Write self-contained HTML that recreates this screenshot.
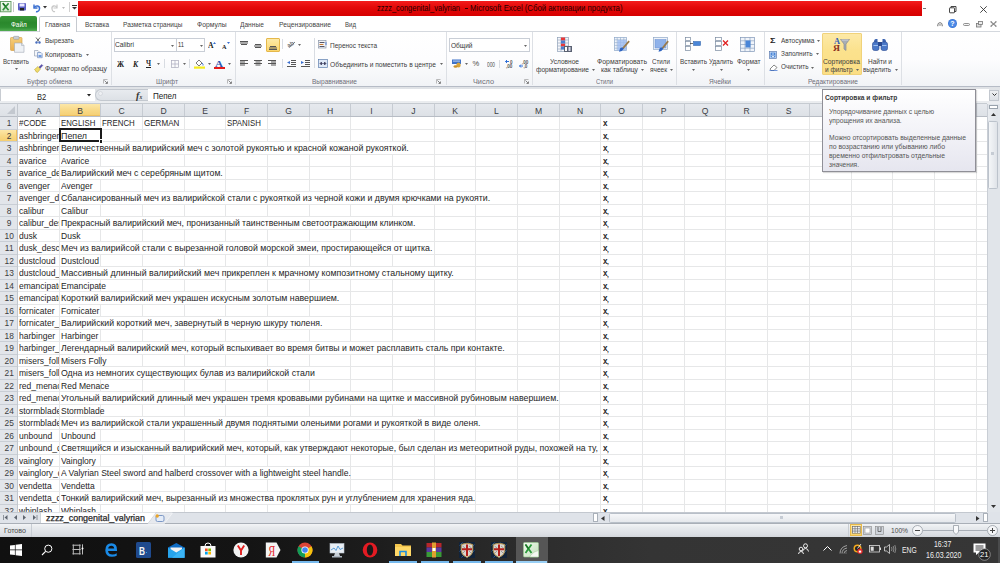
<!DOCTYPE html><html><head><meta charset="utf-8"><style>
html,body{margin:0;padding:0;width:1000px;height:563px;overflow:hidden;background:#fff;position:relative;font-family:"Liberation Sans",sans-serif}
.t{position:absolute;white-space:nowrap;line-height:0}
svg{overflow:visible}
</style></head><body>
<div style="position:absolute;left:0px;top:0px;width:1000px;height:16px;background:#fff"></div>
<div style="position:absolute;left:78px;top:0.5px;width:844px;height:15px;background:linear-gradient(#f41d1d,#e40a0a 40%,#d60000)"></div>
<div class="t" style="left:377px;top:8.16px;font-size:8.6px;color:#1e0000;font-weight:normal;transform:scaleX(0.8688);transform-origin:0 0;">zzzz_congenital_valyrian</div>
<div style="position:absolute;left:465px;top:7.5px;width:3px;height:0.9px;background:#3a0000"></div>
<div class="t" style="left:470px;top:8.16px;font-size:8.6px;color:#1e0000;font-weight:normal;transform:scaleX(0.9034);transform-origin:0 0;">Microsoft Excel (Сбой активации продукта)</div>
<div style="position:absolute;left:923px;top:8px;width:3px;height:1px;background:#777"></div>
<svg style="position:absolute;left:949px;top:6px" width="8" height="7" viewBox="0 0 8 7"><rect x="0.5" y="1.8" width="5" height="5" rx="0.5" fill="none" stroke="#333" stroke-width="0.9"/><path d="M2 1.8V0.5H7V5.5H5.5" fill="none" stroke="#333" stroke-width="0.9"/></svg>
<svg style="position:absolute;left:980px;top:6px" width="7" height="7" viewBox="0 0 7 7"><path d="M0.3 0.3L6.7 6.7M6.7 0.3L0.3 6.7" stroke="#333" stroke-width="0.9"/></svg>
<svg style="position:absolute;left:0px;top:1px" width="12" height="11" viewBox="0 0 12 11"><defs><linearGradient id="xg" x1="0" y1="0" x2="0" y2="1"><stop offset="0" stop-color="#f4faf2"/><stop offset="1" stop-color="#d6ead2"/></linearGradient></defs><rect x="0.5" y="0.5" width="10.5" height="10.3" fill="url(#xg)" stroke="#5f9a5f" stroke-width="0.9"/><path d="M2.8 2.2L8.6 9.2M8.6 2.2L2.8 9.2" stroke="#2f8f3a" stroke-width="1.7"/><path d="M2.8 2.2L5.7 5.7" stroke="#1a6a24" stroke-width="1.2"/></svg>
<div style="position:absolute;left:13px;top:2px;width:1px;height:10px;background:#c8c8c8"></div>
<svg style="position:absolute;left:18px;top:3px" width="8" height="8" viewBox="0 0 8 8"><rect x="0" y="0" width="8" height="7.5" rx="1" fill="#5b5fc4"/><rect x="1.5" y="0.5" width="5" height="3" fill="#e8e8ff"/><rect x="2" y="5" width="4" height="2.5" fill="#222"/></svg>
<svg style="position:absolute;left:32px;top:3px" width="8" height="8" viewBox="0 0 8 8"><path d="M2 1.5V5H5.5" fill="none" stroke="#3a6fd0" stroke-width="1.4"/><path d="M2 4.5C4 2 8 2.5 7.5 6S4 8.5 4 8.5" fill="none" stroke="#3a6fd0" stroke-width="1.5"/></svg>
<svg style="position:absolute;left:43px;top:6px" width="4" height="3" viewBox="0 0 4 3"><path d="M0 0H4L2 2.5Z" fill="#333"/></svg>
<svg style="position:absolute;left:51px;top:3px" width="7" height="8" viewBox="0 0 7 8"><path d="M6 1.5V5H2.5" fill="none" stroke="#c8c8c8" stroke-width="1.2"/><path d="M6 4.5C4 2 0.5 2.5 1 6S4 8.5 4 8.5" fill="none" stroke="#c8c8c8" stroke-width="1.3"/></svg>
<svg style="position:absolute;left:62px;top:7px" width="3" height="2" viewBox="0 0 3 2"><path d="M0 0H3L1.5 2Z" fill="#bbb"/></svg>
<div style="position:absolute;left:69px;top:2px;width:1px;height:10px;background:#d0d0d0"></div>
<svg style="position:absolute;left:72px;top:5px" width="5" height="5" viewBox="0 0 5 5"><rect x="0" y="0" width="5" height="1" fill="#333"/><path d="M0 2H5L2.5 4.5Z" fill="#333"/></svg>
<div style="position:absolute;left:0px;top:31px;width:1000px;height:1px;background:#d4d8de"></div>
<div style="position:absolute;left:0px;top:16.2px;width:36.6px;height:15.3px;background:linear-gradient(#3a983a,#2a882c 45%,#2f8f32 75%,#52ad52);border-radius:2px 2px 0 0"></div>
<div class="t" style="left:10.6px;top:24.62px;font-size:7.2px;color:#fff;font-weight:normal;transform:scaleX(0.8885);transform-origin:0 0;">Файл</div>
<div style="position:absolute;left:38.5px;top:16.2px;width:38.5px;height:15.8px;background:#fff;border:1px solid #c6cad0;border-bottom:none;border-radius:2px 2px 0 0;box-sizing:border-box"></div>
<div class="t" style="left:45px;top:24.62px;font-size:7.2px;color:#444;font-weight:normal;transform:scaleX(0.9139);transform-origin:0 0;">Главная</div>
<div class="t" style="left:84.5px;top:24.62px;font-size:7.2px;color:#444;font-weight:normal;transform:scaleX(0.8984);transform-origin:0 0;">Вставка</div>
<div class="t" style="left:122.6px;top:24.62px;font-size:7.2px;color:#444;font-weight:normal;transform:scaleX(0.9110);transform-origin:0 0;">Разметка страницы</div>
<div class="t" style="left:196.5px;top:24.62px;font-size:7.2px;color:#444;font-weight:normal;transform:scaleX(0.9432);transform-origin:0 0;">Формулы</div>
<div class="t" style="left:240px;top:24.62px;font-size:7.2px;color:#444;font-weight:normal;transform:scaleX(0.9165);transform-origin:0 0;">Данные</div>
<div class="t" style="left:278.8px;top:24.62px;font-size:7.2px;color:#444;font-weight:normal;transform:scaleX(0.9352);transform-origin:0 0;">Рецензирование</div>
<div class="t" style="left:345px;top:24.62px;font-size:7.2px;color:#444;font-weight:normal;transform:scaleX(0.8460);transform-origin:0 0;">Вид</div>
<svg style="position:absolute;left:937px;top:21.5px" width="6" height="5" viewBox="0 0 6 5"><path d="M0.6 4.2Q0.6 0.6 3 0.6Q5.4 0.6 5.4 4.2" fill="none" stroke="#666" stroke-width="0.9"/><path d="M1.8 3.6L3 2.5L4.2 3.6" fill="none" stroke="#666" stroke-width="0.8"/></svg>
<svg style="position:absolute;left:948px;top:19px" width="9" height="9" viewBox="0 0 9 9"><circle cx="4.5" cy="4.5" r="4.5" fill="#3b78d8"/><circle cx="4.5" cy="4.5" r="3.6" fill="#4d8ae6"/><text x="4.5" y="7.3" font-size="7" font-weight="bold" fill="#fff" text-anchor="middle" font-family="Liberation Sans">?</text></svg>
<svg style="position:absolute;left:963px;top:23px" width="7" height="3" viewBox="0 0 7 3"><rect x="0.5" y="0.5" width="6" height="2" rx="1" fill="#f4f4f4" stroke="#777" stroke-width="0.8"/></svg>
<svg style="position:absolute;left:976px;top:21px" width="7" height="6" viewBox="0 0 7 6"><rect x="0.5" y="2.5" width="4.5" height="3.5" fill="#ddd" stroke="#777" stroke-width="0.8"/><rect x="2.5" y="0.5" width="4" height="3" fill="#eee" stroke="#777" stroke-width="0.8"/></svg>
<svg style="position:absolute;left:990px;top:21px" width="7" height="6" viewBox="0 0 7 6"><path d="M0.8 0.8L6.2 5.2M6.2 0.8L0.8 5.2" stroke="#8a8a8a" stroke-width="1.1"/><path d="M0.3 0.6H2M5 0.6H6.7M0.3 5.4H2M5 5.4H6.7" stroke="#999" stroke-width="0.8"/></svg>
<div style="position:absolute;left:0px;top:32px;width:1000px;height:54px;background:linear-gradient(#ffffff,#fdfdfe 50%,#f1f3f6)"></div>
<div style="position:absolute;left:39.5px;top:31px;width:36.5px;height:2px;background:#fff"></div>
<div style="position:absolute;left:0px;top:86px;width:1000px;height:1px;background:#b6bcc6"></div>
<div style="position:absolute;left:110.5px;top:32px;width:1px;height:53px;background:#dde0e5"></div>
<div style="position:absolute;left:234.5px;top:32px;width:1px;height:53px;background:#dde0e5"></div>
<div style="position:absolute;left:445.8px;top:32px;width:1px;height:53px;background:#dde0e5"></div>
<div style="position:absolute;left:531.8px;top:32px;width:1px;height:53px;background:#dde0e5"></div>
<div style="position:absolute;left:676.3px;top:32px;width:1px;height:53px;background:#dde0e5"></div>
<div style="position:absolute;left:763.5px;top:32px;width:1px;height:53px;background:#dde0e5"></div>
<div style="position:absolute;left:900.9px;top:32px;width:1px;height:53px;background:#dde0e5"></div>
<div class="t" style="left:27px;top:81.72px;font-size:6.9px;color:#6e6e78;font-weight:normal;transform:scaleX(0.9611);transform-origin:0 0;">Буфер обмена</div>
<svg style="position:absolute;left:103px;top:79px" width="5" height="5" viewBox="0 0 5 5"><path d="M0.5 4.5V0.5H4.5" fill="none" stroke="#aaa" stroke-width="0.8"/><path d="M1.5 1.5L4 4M4.5 2.5V4.5H2.5" fill="none" stroke="#777" stroke-width="0.9"/></svg>
<div class="t" style="left:156px;top:81.72px;font-size:6.9px;color:#6e6e78;font-weight:normal;transform:scaleX(0.9704);transform-origin:0 0;">Шрифт</div>
<svg style="position:absolute;left:227px;top:79px" width="5" height="5" viewBox="0 0 5 5"><path d="M0.5 4.5V0.5H4.5" fill="none" stroke="#aaa" stroke-width="0.8"/><path d="M1.5 1.5L4 4M4.5 2.5V4.5H2.5" fill="none" stroke="#777" stroke-width="0.9"/></svg>
<div class="t" style="left:312px;top:81.72px;font-size:6.9px;color:#6e6e78;font-weight:normal;transform:scaleX(0.9488);transform-origin:0 0;">Выравнивание</div>
<svg style="position:absolute;left:436px;top:79px" width="5" height="5" viewBox="0 0 5 5"><path d="M0.5 4.5V0.5H4.5" fill="none" stroke="#aaa" stroke-width="0.8"/><path d="M1.5 1.5L4 4M4.5 2.5V4.5H2.5" fill="none" stroke="#777" stroke-width="0.9"/></svg>
<div class="t" style="left:473px;top:81.72px;font-size:6.9px;color:#6e6e78;font-weight:normal;transform:scaleX(1.0597);transform-origin:0 0;">Число</div>
<svg style="position:absolute;left:524px;top:79px" width="5" height="5" viewBox="0 0 5 5"><path d="M0.5 4.5V0.5H4.5" fill="none" stroke="#aaa" stroke-width="0.8"/><path d="M1.5 1.5L4 4M4.5 2.5V4.5H2.5" fill="none" stroke="#777" stroke-width="0.9"/></svg>
<div class="t" style="left:596px;top:81.72px;font-size:6.9px;color:#6e6e78;font-weight:normal;transform:scaleX(0.8564);transform-origin:0 0;">Стили</div>
<div class="t" style="left:709px;top:81.72px;font-size:6.9px;color:#6e6e78;font-weight:normal;transform:scaleX(0.9519);transform-origin:0 0;">Ячейки</div>
<div class="t" style="left:807.5px;top:81.72px;font-size:6.9px;color:#6e6e78;font-weight:normal;transform:scaleX(0.9526);transform-origin:0 0;">Редактирование</div>
<svg style="position:absolute;left:10px;top:36px" width="15" height="17" viewBox="0 0 15 17"><defs><linearGradient id="cb" x1="0" y1="0" x2="0" y2="1"><stop offset="0" stop-color="#f6cf7c"/><stop offset="1" stop-color="#e9ae4e"/></linearGradient></defs><rect x="0.5" y="1.5" width="11.5" height="13" rx="0.8" fill="url(#cb)" stroke="#d19a3e" stroke-width="0.6"/><rect x="3.5" y="0.3" width="5.5" height="3" rx="0.8" fill="#c9ced6" stroke="#8a9099" stroke-width="0.5"/><path d="M4.5 7H11.5L14 9.5V16.3H4.5Z" fill="#eef1f5" stroke="#a2aab5" stroke-width="0.6"/><path d="M11.5 7V9.5H14" fill="#d5dae2" stroke="#a2aab5" stroke-width="0.5"/></svg>
<div class="t" style="left:3px;top:61.72px;font-size:6.9px;color:#3c3c3c;font-weight:normal;transform:scaleX(0.8902);transform-origin:0 0;">Вставить</div>
<svg style="position:absolute;left:15px;top:68px" width="3" height="2" viewBox="0 0 3 2"><path d="M0 0H3L1.5 2Z" fill="#666"/></svg>
<svg style="position:absolute;left:35px;top:37px" width="6" height="7" viewBox="0 0 6 7"><path d="M1 0.5L4 4.5M5 0.5L2 4.5" stroke="#444" stroke-width="0.8"/><circle cx="1.5" cy="5.5" r="1.2" fill="#4a6fc0"/><circle cx="4.5" cy="5.5" r="1.2" fill="#4a6fc0"/></svg>
<div class="t" style="left:45px;top:40.72px;font-size:6.9px;color:#3c3c3c;font-weight:normal;transform:scaleX(0.9462);transform-origin:0 0;">Вырезать</div>
<svg style="position:absolute;left:34px;top:49.5px" width="9" height="8" viewBox="0 0 9 8"><path d="M0.5 0.5H4L5 1.5V6H0.5Z" fill="#f4f6fa" stroke="#8a96aa" stroke-width="0.6"/><path d="M3.5 2.5H7L8.2 3.7V7.7H3.5Z" fill="#e6edf8" stroke="#5f7fb8" stroke-width="0.6"/><rect x="4.5" y="5" width="3" height="2" fill="#6f9ae0"/></svg>
<div class="t" style="left:45px;top:54.72px;font-size:6.9px;color:#3c3c3c;font-weight:normal;transform:scaleX(0.9973);transform-origin:0 0;">Копировать</div>
<svg style="position:absolute;left:85.5px;top:54px" width="3" height="2" viewBox="0 0 3 2"><path d="M0 0H3L1.5 2Z" fill="#666"/></svg>
<svg style="position:absolute;left:34px;top:64px" width="9" height="9" viewBox="0 0 9 9"><path d="M0.5 5.5L4 2.5L6.5 5L3.5 8.5Z" fill="#f0dc6a" stroke="#b09a30" stroke-width="0.5"/><path d="M0.5 5.5L3.5 8.5L2 8.2Z" fill="#d8c050"/><path d="M5 3L7.8 0.5L8.8 1.5L6.2 4.3Z" fill="#5a4fb0" stroke="#3a3080" stroke-width="0.4"/></svg>
<div class="t" style="left:45px;top:68.72px;font-size:6.9px;color:#3c3c3c;font-weight:normal;transform:scaleX(1.0035);transform-origin:0 0;">Формат по образцу</div>
<div style="position:absolute;left:113.5px;top:38px;width:63px;height:13.8px;background:#fff;border:1px solid #c9ced6;box-sizing:border-box"></div>
<div style="position:absolute;left:175.5px;top:38px;width:29.5px;height:13.8px;background:#fff;border:1px solid #c9ced6;box-sizing:border-box"></div>
<div class="t" style="left:115px;top:45.06px;font-size:7.4px;color:#333;font-weight:normal;transform:scaleX(0.9071);transform-origin:0 0;">Calibri</div>
<div class="t" style="left:178px;top:45.06px;font-size:7.4px;color:#333;font-weight:normal;transform:scaleX(0.7821);transform-origin:0 0;">11</div>
<svg style="position:absolute;left:171px;top:44.5px" width="3" height="2" viewBox="0 0 3 2"><path d="M0 0H3L1.5 2Z" fill="#666"/></svg>
<svg style="position:absolute;left:200px;top:44.5px" width="3" height="2" viewBox="0 0 3 2"><path d="M0 0H3L1.5 2Z" fill="#666"/></svg>
<div class="t" style="left:207.5px;top:46.36px;font-size:8px;color:#222;font-weight:bold;font-family:Liberation Serif,serif;transform:scaleX(0.9520);transform-origin:0 0;">A</div>
<svg style="position:absolute;left:213px;top:41.5px" width="3" height="2" viewBox="0 0 3 2"><path d="M0 2L1.5 0L3 2Z" fill="#3a6fd0"/></svg>
<div class="t" style="left:222px;top:47.02px;font-size:6px;color:#222;font-weight:bold;font-family:Liberation Serif,serif;transform:scaleX(1.0385);transform-origin:0 0;">A</div>
<svg style="position:absolute;left:227px;top:42px" width="3" height="2" viewBox="0 0 3 2"><path d="M0 0H3L1.5 2Z" fill="#3a6fd0"/></svg>
<div class="t" style="left:117px;top:64.53px;font-size:7.5px;color:#222;font-weight:bold;font-family:Liberation Serif,serif;transform:scaleX(0.9439);transform-origin:0 0;">Ж</div>
<div class="t" style="left:132.5px;top:64.53px;font-size:7.5px;color:#222;font-weight:bold;font-family:Liberation Serif,serif;transform:scaleX(1.0114);transform-origin:0 0;font-style:italic">К</div>
<div class="t" style="left:145.5px;top:64.03px;font-size:7.5px;color:#222;font-weight:bold;font-family:Liberation Serif,serif;transform:scaleX(0.9084);transform-origin:0 0;">Ч</div>
<div style="position:absolute;left:145.5px;top:66.5px;width:5.5px;height:0.8px;background:#222"></div>
<svg style="position:absolute;left:157px;top:62.5px" width="3" height="2" viewBox="0 0 3 2"><path d="M0 0H3L1.5 2Z" fill="#666"/></svg>
<div style="position:absolute;left:164px;top:59px;width:1px;height:9px;background:#d8dce2"></div>
<svg style="position:absolute;left:171px;top:60px" width="8" height="8" viewBox="0 0 8 8"><rect x="0.5" y="0.5" width="7" height="7" fill="none" stroke="#aab" stroke-width="0.7"/><path d="M4 0.5V7.5M0.5 4H7.5" stroke="#aab" stroke-width="0.7"/></svg>
<svg style="position:absolute;left:183px;top:62.5px" width="3" height="2" viewBox="0 0 3 2"><path d="M0 0H3L1.5 2Z" fill="#666"/></svg>
<div style="position:absolute;left:189px;top:59px;width:1px;height:9px;background:#d8dce2"></div>
<svg style="position:absolute;left:194px;top:59px" width="11" height="10" viewBox="0 0 11 10"><path d="M2 4L5 1L8 4L5 7Z" fill="#fff" stroke="#555" stroke-width="0.8"/><path d="M8 4Q9.5 5.5 9 6.5" stroke="#3a6fd0" stroke-width="1" fill="none"/><rect x="0" y="7.5" width="11" height="2.2" fill="#f5ec1c"/></svg>
<svg style="position:absolute;left:208px;top:62.5px" width="3" height="2" viewBox="0 0 3 2"><path d="M0 0H3L1.5 2Z" fill="#666"/></svg>
<div class="t" style="left:215px;top:63.70px;font-size:8.5px;color:#2f55b0;font-weight:bold;font-family:Liberation Serif,serif;transform:scaleX(1.3033);transform-origin:0 0;">A</div>
<div style="position:absolute;left:214px;top:66.8px;width:10.5px;height:2.2px;background:#e41b1b"></div>
<svg style="position:absolute;left:228px;top:62.5px" width="3" height="2" viewBox="0 0 3 2"><path d="M0 0H3L1.5 2Z" fill="#666"/></svg>
<svg style="position:absolute;left:240px;top:41px" width="9" height="4.5" viewBox="0 0 9 4.5"><rect x="0" y="0.0" width="8" height="1" fill="#555"/><rect x="0" y="1.5" width="8" height="1" fill="#555"/><rect x="1" y="3.0" width="6" height="1" fill="#555"/></svg>
<svg style="position:absolute;left:254px;top:43.5px" width="9" height="4.5" viewBox="0 0 9 4.5"><rect x="1" y="0.0" width="6" height="1" fill="#555"/><rect x="0" y="1.5" width="8" height="1" fill="#555"/><rect x="1" y="3.0" width="6" height="1" fill="#555"/></svg>
<div style="position:absolute;left:266px;top:38px;width:13.5px;height:13.5px;background:linear-gradient(#fdeaa8,#fbd66d);border:1px solid #e5b84a;box-sizing:border-box;border-radius:1px"></div>
<svg style="position:absolute;left:269px;top:45.5px" width="9" height="4.5" viewBox="0 0 9 4.5"><rect x="1" y="0.0" width="6" height="1" fill="#555"/><rect x="0" y="1.5" width="8" height="1" fill="#555"/><rect x="0" y="3.0" width="8" height="1" fill="#555"/></svg>
<div style="position:absolute;left:281.5px;top:39px;width:1px;height:10px;background:#d8dce2"></div>
<svg style="position:absolute;left:287px;top:40px" width="9" height="8" viewBox="0 0 9 8"><text x="0" y="6" font-size="6" font-family="Liberation Sans" fill="#444" transform="rotate(-30 4 4)">ab</text><path d="M2 7.5L8 2" stroke="#444" stroke-width="0.7"/></svg>
<svg style="position:absolute;left:298px;top:43.5px" width="3" height="2" viewBox="0 0 3 2"><path d="M0 0H3L1.5 2Z" fill="#666"/></svg>
<div style="position:absolute;left:313.5px;top:38px;width:1px;height:30px;background:#d8dce2"></div>
<svg style="position:absolute;left:240px;top:60px" width="9" height="6.0" viewBox="0 0 9 6.0"><rect x="0" y="0.0" width="8" height="1" fill="#555"/><rect x="0" y="1.5" width="5" height="1" fill="#555"/><rect x="0" y="3.0" width="8" height="1" fill="#555"/><rect x="0" y="4.5" width="5" height="1" fill="#555"/></svg>
<svg style="position:absolute;left:254px;top:60px" width="9" height="6.0" viewBox="0 0 9 6.0"><rect x="0" y="0.0" width="8" height="1" fill="#555"/><rect x="1.5" y="1.5" width="5" height="1" fill="#555"/><rect x="0" y="3.0" width="8" height="1" fill="#555"/><rect x="1.5" y="4.5" width="5" height="1" fill="#555"/></svg>
<svg style="position:absolute;left:268px;top:60px" width="9" height="6.0" viewBox="0 0 9 6.0"><rect x="0" y="0.0" width="8" height="1" fill="#555"/><rect x="3" y="1.5" width="5" height="1" fill="#555"/><rect x="0" y="3.0" width="8" height="1" fill="#555"/><rect x="3" y="4.5" width="5" height="1" fill="#555"/></svg>
<div style="position:absolute;left:281.5px;top:59px;width:1px;height:9px;background:#d8dce2"></div>
<svg style="position:absolute;left:287px;top:60px" width="9" height="7" viewBox="0 0 9 7"><rect x="4" y="0" width="5" height="1" fill="#555"/><rect x="4" y="2" width="5" height="1" fill="#555"/><rect x="4" y="4" width="5" height="1" fill="#555"/><rect x="0" y="6" width="9" height="1" fill="#555"/><path d="M0 2.5L3 1V4Z" fill="#3a6fd0"/></svg>
<svg style="position:absolute;left:301px;top:60px" width="9" height="7" viewBox="0 0 9 7"><rect x="4" y="0" width="5" height="1" fill="#555"/><rect x="4" y="2" width="5" height="1" fill="#555"/><rect x="4" y="4" width="5" height="1" fill="#555"/><rect x="0" y="6" width="9" height="1" fill="#555"/><path d="M3 2.5L0 1V4Z" fill="#3a6fd0"/></svg>
<svg style="position:absolute;left:318px;top:40px" width="10" height="9" viewBox="0 0 10 9"><rect x="0.5" y="0.5" width="7.5" height="7.5" fill="#f2f4f8" stroke="#8a96a8" stroke-width="0.7"/><rect x="1.5" y="2" width="5" height="1" fill="#556"/><rect x="1.5" y="4" width="4" height="1" fill="#c87a30"/><rect x="1.5" y="6" width="5" height="1" fill="#556"/><path d="M8 2V5" stroke="#3a6fd0" stroke-width="0.8"/></svg>
<div class="t" style="left:330px;top:45.72px;font-size:6.9px;color:#3c3c3c;font-weight:normal;transform:scaleX(0.9437);transform-origin:0 0;">Перенос текста</div>
<svg style="position:absolute;left:318px;top:59px" width="10" height="9" viewBox="0 0 10 9"><rect x="0.5" y="0.5" width="9" height="8" fill="#dfe9f7" stroke="#5f7fae" stroke-width="0.7"/><path d="M3 4.5H7M2 4.5L3.5 3V6ZM8 4.5L6.5 3V6Z" stroke="#335" stroke-width="0.6" fill="#335"/></svg>
<div class="t" style="left:330px;top:64.72px;font-size:6.9px;color:#3c3c3c;font-weight:normal;transform:scaleX(0.9622);transform-origin:0 0;">Объединить и поместить в центре</div>
<svg style="position:absolute;left:440px;top:62.5px" width="3" height="2" viewBox="0 0 3 2"><path d="M0 0H3L1.5 2Z" fill="#666"/></svg>
<div style="position:absolute;left:449px;top:38px;width:80.5px;height:13.5px;background:#fff;border:1px solid #c9ced6;box-sizing:border-box"></div>
<div class="t" style="left:451px;top:45.56px;font-size:7.4px;color:#333;font-weight:normal;transform:scaleX(0.8841);transform-origin:0 0;">Общий</div>
<svg style="position:absolute;left:524px;top:44.5px" width="3" height="2" viewBox="0 0 3 2"><path d="M0 0H3L1.5 2Z" fill="#666"/></svg>
<svg style="position:absolute;left:452px;top:59px" width="10" height="9" viewBox="0 0 10 9"><rect x="0" y="0.5" width="9" height="4.5" fill="#3f72c8"/><rect x="1" y="1.5" width="7" height="1.2" fill="#a9c4ee"/><ellipse cx="6.5" cy="6" rx="2.2" ry="2.5" fill="#d9a53a"/><ellipse cx="3.5" cy="7.5" rx="2" ry="1.3" fill="#c88f2a"/></svg>
<svg style="position:absolute;left:465px;top:62.5px" width="3" height="2" viewBox="0 0 3 2"><path d="M0 0H3L1.5 2Z" fill="#666"/></svg>
<div class="t" style="left:472.5px;top:64.49px;font-size:7.6px;color:#4a4a4a;font-weight:normal;">%</div>
<div class="t" style="left:487px;top:64.82px;font-size:6.6px;color:#4a4a4a;font-weight:normal;transform:scaleX(0.7272);transform-origin:0 0;">000</div>
<div style="position:absolute;left:499px;top:60px;width:1px;height:8px;background:#d8dce2"></div>
<svg style="position:absolute;left:505px;top:59px" width="8" height="9" viewBox="0 0 8 9"><path d="M0.5 2.5H4M2 1L0.5 2.5L2 4" fill="none" stroke="#2f6fd8" stroke-width="1"/><text x="5" y="4.5" font-size="4.6" font-weight="bold" font-family="Liberation Sans" fill="#555">0</text><text x="1" y="9" font-size="4.6" font-weight="bold" font-family="Liberation Sans" fill="#555">,00</text></svg>
<svg style="position:absolute;left:519px;top:59px" width="9" height="9" viewBox="0 0 9 9"><text x="3" y="4.5" font-size="4.6" font-weight="bold" font-family="Liberation Sans" fill="#555">,00</text><path d="M0.5 7H4M2 5.5L0.5 7L2 8.5" fill="none" stroke="#2f6fd8" stroke-width="1"/><text x="4.5" y="9" font-size="4.6" font-weight="bold" font-family="Liberation Sans" fill="#555">,0</text></svg>
<svg style="position:absolute;left:557px;top:37px" width="12" height="15" viewBox="0 0 12 15"><rect x="0.5" y="0.5" width="11" height="14" fill="#f4f6fa" stroke="#8fa0b8" stroke-width="0.7"/><path d="M4.0 0.5V14.5" stroke="#8fa0b8" stroke-width="0.6"/><path d="M8.0 0.5V14.5" stroke="#8fa0b8" stroke-width="0.6"/><path d="M0.5 3.0H11.5" stroke="#8fa0b8" stroke-width="0.6"/><path d="M0.5 6.0H11.5" stroke="#8fa0b8" stroke-width="0.6"/><path d="M0.5 9.0H11.5" stroke="#8fa0b8" stroke-width="0.6"/><path d="M0.5 12.0H11.5" stroke="#8fa0b8" stroke-width="0.6"/><rect x="4" y="0.5" width="4" height="3" fill="#e83838"/><rect x="4" y="6.5" width="4" height="3" fill="#e83838"/><rect x="4" y="3.5" width="4" height="3" fill="#4a7fd0"/><rect x="4" y="9.5" width="4" height="3" fill="#4a7fd0"/><rect x="7" y="9" width="8" height="6" fill="#5a6272"/><rect x="8" y="10" width="2" height="4" fill="#fff"/><rect x="11.5" y="10" width="2" height="4" fill="#dde"/></svg>
<div class="t" style="left:550px;top:61.72px;font-size:6.9px;color:#3c3c3c;font-weight:normal;transform:scaleX(0.9533);transform-origin:0 0;">Условное</div>
<div class="t" style="left:536px;top:69.72px;font-size:6.9px;color:#3c3c3c;font-weight:normal;transform:scaleX(0.9580);transform-origin:0 0;">форматирование</div>
<svg style="position:absolute;left:592px;top:68.5px" width="3" height="2" viewBox="0 0 3 2"><path d="M0 0H3L1.5 2Z" fill="#666"/></svg>
<svg style="position:absolute;left:614px;top:37px" width="13" height="14" viewBox="0 0 13 14"><rect x="0.5" y="0.5" width="12" height="13" fill="#eef3fb" stroke="#8fa8c8" stroke-width="0.7"/><path d="M3.2 0.5V13.5" stroke="#8fa8c8" stroke-width="0.6"/><path d="M6.5 0.5V13.5" stroke="#8fa8c8" stroke-width="0.6"/><path d="M9.8 0.5V13.5" stroke="#8fa8c8" stroke-width="0.6"/><path d="M0.5 2.8H12.5" stroke="#8fa8c8" stroke-width="0.6"/><path d="M0.5 5.6H12.5" stroke="#8fa8c8" stroke-width="0.6"/><path d="M0.5 8.4H12.5" stroke="#8fa8c8" stroke-width="0.6"/><path d="M0.5 11.2H12.5" stroke="#8fa8c8" stroke-width="0.6"/><rect x="3.5" y="3" width="9" height="10.5" fill="#9dbcf0" opacity="0.8"/><path d="M8 11L14.5 3.5L15.8 4.8L9.5 12Z" fill="#9a7a4a"/><path d="M6 11.5Q8 9.5 9.8 11.8Q8.5 14.5 5 14.8Z" fill="#2f64c0"/></svg>
<div class="t" style="left:597px;top:61.72px;font-size:6.9px;color:#3c3c3c;font-weight:normal;transform:scaleX(1.0000);transform-origin:0 0;">Форматировать</div>
<div class="t" style="left:601px;top:69.72px;font-size:6.9px;color:#3c3c3c;font-weight:normal;transform:scaleX(0.9805);transform-origin:0 0;">как таблицу</div>
<svg style="position:absolute;left:640.5px;top:68.5px" width="3" height="2" viewBox="0 0 3 2"><path d="M0 0H3L1.5 2Z" fill="#666"/></svg>
<svg style="position:absolute;left:653px;top:37px" width="16" height="15" viewBox="0 0 16 15"><rect x="0.5" y="0.5" width="14" height="12" fill="#f0f4fa" stroke="#8fa8c8" stroke-width="0.7"/><rect x="2" y="2.5" width="11" height="8.5" fill="#8fb2ea" stroke="#6a8fd0" stroke-width="0.5"/><path d="M8.5 11L14.5 3.5L15.8 4.8L10 12Z" fill="#9a7a4a"/><path d="M6.5 11.5Q8.5 9.5 10.3 11.8Q9 14.5 5.5 14.8Z" fill="#2f64c0"/></svg>
<div class="t" style="left:652px;top:61.72px;font-size:6.9px;color:#3c3c3c;font-weight:normal;transform:scaleX(0.9068);transform-origin:0 0;">Стили</div>
<div class="t" style="left:649.6px;top:69.72px;font-size:6.9px;color:#3c3c3c;font-weight:normal;transform:scaleX(0.9444);transform-origin:0 0;">ячеек</div>
<svg style="position:absolute;left:670px;top:68.5px" width="3" height="2" viewBox="0 0 3 2"><path d="M0 0H3L1.5 2Z" fill="#666"/></svg>
<svg style="position:absolute;left:685px;top:37px" width="16" height="14" viewBox="0 0 16 14"><rect x="0.5" y="0.5" width="5" height="3" fill="#fff" stroke="#7a8aa0" stroke-width="0.7"/><rect x="0.5" y="9.5" width="5" height="4" fill="#fff" stroke="#7a8aa0" stroke-width="0.7"/><rect x="0.5" y="4.5" width="5" height="4" fill="#fff" stroke="#7a8aa0" stroke-width="0.7"/><rect x="8.5" y="4.5" width="7" height="4" fill="#4a86d8" stroke="#3a6ab0" stroke-width="0.6"/><path d="M5 6.5H8" stroke="#333" stroke-width="0.7"/></svg>
<div class="t" style="left:680px;top:61.72px;font-size:6.9px;color:#3c3c3c;font-weight:normal;transform:scaleX(0.9244);transform-origin:0 0;">Вставить</div>
<svg style="position:absolute;left:692px;top:68.5px" width="3" height="2" viewBox="0 0 3 2"><path d="M0 0H3L1.5 2Z" fill="#666"/></svg>
<svg style="position:absolute;left:715px;top:37px" width="14" height="14" viewBox="0 0 14 14"><rect x="0.5" y="0.5" width="6" height="3" fill="#fff" stroke="#7a8aa0" stroke-width="0.7"/><rect x="0.5" y="9.5" width="6" height="4" fill="#fff" stroke="#7a8aa0" stroke-width="0.7"/><rect x="0.5" y="4.5" width="6" height="4" fill="#fff" stroke="#7a8aa0" stroke-width="0.7"/><path d="M8 3.5L13 8.5M13 3.5L8 8.5" stroke="#e02020" stroke-width="1.3"/></svg>
<div class="t" style="left:709.2px;top:61.72px;font-size:6.9px;color:#3c3c3c;font-weight:normal;transform:scaleX(0.9123);transform-origin:0 0;">Удалить</div>
<svg style="position:absolute;left:720px;top:68.5px" width="3" height="2" viewBox="0 0 3 2"><path d="M0 0H3L1.5 2Z" fill="#666"/></svg>
<svg style="position:absolute;left:740px;top:37px" width="15" height="15" viewBox="0 0 15 15"><rect x="0.5" y="0.5" width="14" height="14" fill="#f0f4fa" stroke="#8098b8" stroke-width="0.7"/><path d="M5.0 0.5V14.5" stroke="#8098b8" stroke-width="0.6"/><path d="M10.0 0.5V14.5" stroke="#8098b8" stroke-width="0.6"/><path d="M0.5 3.8H14.5" stroke="#8098b8" stroke-width="0.6"/><path d="M0.5 7.5H14.5" stroke="#8098b8" stroke-width="0.6"/><path d="M0.5 11.2H14.5" stroke="#8098b8" stroke-width="0.6"/><rect x="5.5" y="3.5" width="5" height="7" fill="#4a86d8"/></svg>
<div class="t" style="left:737px;top:61.72px;font-size:6.9px;color:#3c3c3c;font-weight:normal;transform:scaleX(0.9601);transform-origin:0 0;">Формат</div>
<svg style="position:absolute;left:747px;top:68.5px" width="3" height="2" viewBox="0 0 3 2"><path d="M0 0H3L1.5 2Z" fill="#666"/></svg>
<div class="t" style="left:770px;top:41.02px;font-size:7.5px;color:#222;font-weight:bold;transform:scaleX(1.2220);transform-origin:0 0;">Σ</div>
<div class="t" style="left:780.5px;top:40.72px;font-size:6.9px;color:#3c3c3c;font-weight:normal;transform:scaleX(0.9478);transform-origin:0 0;">Автосумма</div>
<svg style="position:absolute;left:816.5px;top:40px" width="3" height="2" viewBox="0 0 3 2"><path d="M0 0H3L1.5 2Z" fill="#666"/></svg>
<svg style="position:absolute;left:769px;top:50.5px" width="8" height="8" viewBox="0 0 8 8"><rect x="0.5" y="0.5" width="7" height="7" fill="#dde8f8" stroke="#5a7ab0" stroke-width="0.7"/><rect x="1.5" y="1.5" width="5" height="5" fill="#4a86d8"/><path d="M4 2V6M2.5 4.5L4 6L5.5 4.5" stroke="#fff" stroke-width="0.7" fill="none"/></svg>
<div class="t" style="left:780.5px;top:53.72px;font-size:6.9px;color:#3c3c3c;font-weight:normal;transform:scaleX(0.9312);transform-origin:0 0;">Заполнить</div>
<svg style="position:absolute;left:815.5px;top:53px" width="3" height="2" viewBox="0 0 3 2"><path d="M0 0H3L1.5 2Z" fill="#666"/></svg>
<svg style="position:absolute;left:769px;top:63.5px" width="9" height="7" viewBox="0 0 9 7"><path d="M1 5L5 1L8 3.5L5 6.5H2Z" fill="#fff" stroke="#555" stroke-width="0.7"/><path d="M0.5 6.5H8.5" stroke="#3a6fd0" stroke-width="0.7"/></svg>
<div class="t" style="left:780.5px;top:67.22px;font-size:6.9px;color:#3c3c3c;font-weight:normal;transform:scaleX(0.9168);transform-origin:0 0;">Очистить</div>
<svg style="position:absolute;left:811px;top:66.5px" width="3" height="2" viewBox="0 0 3 2"><path d="M0 0H3L1.5 2Z" fill="#666"/></svg>
<div style="position:absolute;left:822px;top:33px;width:39.8px;height:42.4px;background:linear-gradient(#fde9a7,#fbe28e 40%,#fbde84);border:1px solid #f0d27a;box-sizing:border-box;border-radius:1px"></div>
<div class="t" style="left:833.5px;top:42.36px;font-size:8px;color:#2f5cb8;font-weight:bold;font-family:Liberation Serif,serif;transform:scaleX(1.0385);transform-origin:0 0;">A</div>
<div class="t" style="left:833px;top:49.36px;font-size:8px;color:#8c3020;font-weight:bold;font-family:Liberation Serif,serif;transform:scaleX(1.2116);transform-origin:0 0;">Я</div>
<svg style="position:absolute;left:840px;top:39px" width="10" height="12" viewBox="0 0 10 12"><path d="M0.5 0.5H9.5L6 5V11.5L4 10V5Z" fill="#a8aeb6" stroke="#7b828c" stroke-width="0.6"/><path d="M1.5 1H8.5" stroke="#eef" stroke-width="0.6"/></svg>
<div class="t" style="left:823px;top:61.72px;font-size:6.9px;color:#3c3c3c;font-weight:normal;transform:scaleX(0.9784);transform-origin:0 0;">Сортировка</div>
<div class="t" style="left:825px;top:69.72px;font-size:6.9px;color:#3c3c3c;font-weight:normal;transform:scaleX(0.9372);transform-origin:0 0;">и фильтр</div>
<svg style="position:absolute;left:856px;top:68.5px" width="3" height="2" viewBox="0 0 3 2"><path d="M0 0H3L1.5 2Z" fill="#666"/></svg>
<svg style="position:absolute;left:872px;top:38px" width="16" height="13" viewBox="0 0 16 13"><path d="M2 4Q2 1 4 1H5.5V4ZM14 4Q14 1 12 1H10.5V4Z" fill="#3a62b0"/><rect x="0.5" y="4" width="6.5" height="8.5" rx="2" fill="#4a78c8" stroke="#2a4a90" stroke-width="0.6"/><rect x="9" y="4" width="6.5" height="8.5" rx="2" fill="#4a78c8" stroke="#2a4a90" stroke-width="0.6"/><rect x="6" y="4" width="4" height="4" fill="#2a4a90"/><rect x="1.5" y="7" width="4.5" height="1" fill="#9ec0f0"/><rect x="10" y="7" width="4.5" height="1" fill="#9ec0f0"/></svg>
<div class="t" style="left:868px;top:61.72px;font-size:6.9px;color:#3c3c3c;font-weight:normal;transform:scaleX(0.9439);transform-origin:0 0;">Найти и</div>
<div class="t" style="left:863px;top:69.72px;font-size:6.9px;color:#3c3c3c;font-weight:normal;transform:scaleX(0.9075);transform-origin:0 0;">выделить</div>
<svg style="position:absolute;left:895px;top:68.5px" width="3" height="2" viewBox="0 0 3 2"><path d="M0 0H3L1.5 2Z" fill="#666"/></svg>
<div style="position:absolute;left:0px;top:87px;width:1000px;height:17px;background:linear-gradient(#dfe2e6,#e6e9ec 60%,#eceef1)"></div>
<div style="position:absolute;left:1px;top:89px;width:94px;height:12px;background:#fff"></div>
<div style="position:absolute;left:0px;top:89px;width:1px;height:12px;background:#c8ccd2"></div>
<div class="t" style="left:36.8px;top:97.16px;font-size:8.6px;color:#222;font-weight:normal;transform:scaleX(0.8752);transform-origin:0 0;">B2</div>
<svg style="position:absolute;left:86.5px;top:93.5px" width="4" height="3" viewBox="0 0 4 3"><path d="M0 0H4L2 2.5Z" fill="#222"/></svg>
<div style="position:absolute;left:95.2px;top:89.2px;width:52.4px;height:12px;background:linear-gradient(#e8ebef,#dde1e6);border:1px solid #c3c8cf;border-right:none;border-radius:6px 0 0 6px;box-sizing:border-box"></div>
<svg style="position:absolute;left:98px;top:91px" width="5" height="5" viewBox="0 0 5 5"><circle cx="2.5" cy="2.5" r="2" fill="#eef0f3" stroke="#c9cdd3" stroke-width="0.6"/></svg>
<svg style="position:absolute;left:135px;top:90px" width="10" height="11" viewBox="0 0 10 11"><text x="1" y="8.5" font-size="10" font-style="italic" font-weight="bold" font-family="Liberation Serif" fill="#333">f</text><text x="4.6" y="8.8" font-size="5.5" font-style="italic" font-weight="bold" font-family="Liberation Serif" fill="#333">x</text></svg>
<div style="position:absolute;left:147.6px;top:89px;width:841.4px;height:12.2px;background:#fff"></div>
<div class="t" style="left:153px;top:95.73px;font-size:8.4px;color:#222;font-weight:normal;transform:scaleX(0.9600);transform-origin:0 0;">Пепел</div>
<div style="position:absolute;left:989px;top:89.5px;width:10px;height:11.5px;background:linear-gradient(#eef0f3,#dde1e6);border:1px solid #c3c8cf;box-sizing:border-box"></div>
<svg style="position:absolute;left:991.5px;top:93px" width="5" height="3" viewBox="0 0 5 3"><path d="M0.5 0.5L2.5 2.5L4.5 0.5" fill="none" stroke="#333" stroke-width="1"/></svg>
<div style="position:absolute;left:0px;top:103.2px;width:987px;height:1.2px;background:#c6cbd1"></div>
<div style="position:absolute;left:0px;top:104px;width:987px;height:12.4px;background:linear-gradient(#e6e9ee,#dde1e6)"></div>
<div style="position:absolute;left:0px;top:116px;width:987px;height:1px;background:#b8bdc5"></div>
<div style="position:absolute;left:60px;top:104px;width:40px;height:12px;background:linear-gradient(#fce7a8,#f8d885 55%,#f5cf72)"></div>
<div style="position:absolute;left:60px;top:115px;width:40px;height:1px;background:#efc060"></div>
<div style="position:absolute;left:17px;top:104px;width:1px;height:12px;background:#c6cbd2"></div>
<div class="t" style="left:35.63401794433594px;top:111.16px;font-size:8.6px;color:#3a3d44;font-weight:normal;">A</div>
<div style="position:absolute;left:59px;top:104px;width:1px;height:12px;background:#c6cbd2"></div>
<div class="t" style="left:77.13401794433594px;top:111.16px;font-size:8.6px;color:#3a3d44;font-weight:normal;">B</div>
<div style="position:absolute;left:100px;top:104px;width:1px;height:12px;background:#c6cbd2"></div>
<div class="t" style="left:118.39693450927734px;top:111.16px;font-size:8.6px;color:#3a3d44;font-weight:normal;">C</div>
<div style="position:absolute;left:142px;top:104px;width:1px;height:12px;background:#c6cbd2"></div>
<div class="t" style="left:160.39693450927734px;top:111.16px;font-size:8.6px;color:#3a3d44;font-weight:normal;">D</div>
<div style="position:absolute;left:184px;top:104px;width:1px;height:12px;background:#c6cbd2"></div>
<div class="t" style="left:202.13401794433594px;top:111.16px;font-size:8.6px;color:#3a3d44;font-weight:normal;">E</div>
<div style="position:absolute;left:225px;top:104px;width:1px;height:12px;background:#c6cbd2"></div>
<div class="t" style="left:243.87529754638672px;top:111.16px;font-size:8.6px;color:#3a3d44;font-weight:normal;">F</div>
<div style="position:absolute;left:267px;top:104px;width:1px;height:12px;background:#c6cbd2"></div>
<div class="t" style="left:285.15775299072266px;top:111.16px;font-size:8.6px;color:#3a3d44;font-weight:normal;">G</div>
<div style="position:absolute;left:309px;top:104px;width:1px;height:12px;background:#c6cbd2"></div>
<div class="t" style="left:326.89693450927734px;top:111.16px;font-size:8.6px;color:#3a3d44;font-weight:normal;">H</div>
<div style="position:absolute;left:350px;top:104px;width:1px;height:12px;background:#c6cbd2"></div>
<div class="t" style="left:370.30619049072266px;top:111.16px;font-size:8.6px;color:#3a3d44;font-weight:normal;">I</div>
<div style="position:absolute;left:392px;top:104px;width:1px;height:12px;background:#c6cbd2"></div>
<div class="t" style="left:411.3515625px;top:111.16px;font-size:8.6px;color:#3a3d44;font-weight:normal;">J</div>
<div style="position:absolute;left:434px;top:104px;width:1px;height:12px;background:#c6cbd2"></div>
<div class="t" style="left:452.13401794433594px;top:111.16px;font-size:8.6px;color:#3a3d44;font-weight:normal;">K</div>
<div style="position:absolute;left:475px;top:104px;width:1px;height:12px;background:#c6cbd2"></div>
<div class="t" style="left:494.1102828979492px;top:111.16px;font-size:8.6px;color:#3a3d44;font-weight:normal;">L</div>
<div style="position:absolute;left:517px;top:104px;width:1px;height:12px;background:#c6cbd2"></div>
<div class="t" style="left:534.9206695556641px;top:111.16px;font-size:8.6px;color:#3a3d44;font-weight:normal;">M</div>
<div style="position:absolute;left:559px;top:104px;width:1px;height:12px;background:#c6cbd2"></div>
<div class="t" style="left:576.8969345092773px;top:111.16px;font-size:8.6px;color:#3a3d44;font-weight:normal;">N</div>
<div style="position:absolute;left:600px;top:104px;width:1px;height:12px;background:#c6cbd2"></div>
<div class="t" style="left:618.1577529907227px;top:111.16px;font-size:8.6px;color:#3a3d44;font-weight:normal;">O</div>
<div style="position:absolute;left:642px;top:104px;width:1px;height:12px;background:#c6cbd2"></div>
<div class="t" style="left:660.6340179443359px;top:111.16px;font-size:8.6px;color:#3a3d44;font-weight:normal;">P</div>
<div style="position:absolute;left:684px;top:104px;width:1px;height:12px;background:#c6cbd2"></div>
<div class="t" style="left:701.6577529907227px;top:111.16px;font-size:8.6px;color:#3a3d44;font-weight:normal;">Q</div>
<div style="position:absolute;left:725px;top:104px;width:1px;height:12px;background:#c6cbd2"></div>
<div class="t" style="left:743.3969345092773px;top:111.16px;font-size:8.6px;color:#3a3d44;font-weight:normal;">R</div>
<div style="position:absolute;left:767px;top:104px;width:1px;height:12px;background:#c6cbd2"></div>
<div class="t" style="left:785.6340179443359px;top:111.16px;font-size:8.6px;color:#3a3d44;font-weight:normal;">S</div>
<div style="position:absolute;left:809px;top:104px;width:1px;height:12px;background:#c6cbd2"></div>
<div class="t" style="left:827.8752975463867px;top:111.16px;font-size:8.6px;color:#3a3d44;font-weight:normal;">T</div>
<div style="position:absolute;left:851px;top:104px;width:1px;height:12px;background:#c6cbd2"></div>
<div class="t" style="left:868.8969345092773px;top:111.16px;font-size:8.6px;color:#3a3d44;font-weight:normal;">U</div>
<div style="position:absolute;left:892px;top:104px;width:1px;height:12px;background:#c6cbd2"></div>
<div class="t" style="left:910.6340179443359px;top:111.16px;font-size:8.6px;color:#3a3d44;font-weight:normal;">V</div>
<div style="position:absolute;left:934px;top:104px;width:1px;height:12px;background:#c6cbd2"></div>
<div class="t" style="left:951.4444046020508px;top:111.16px;font-size:8.6px;color:#3a3d44;font-weight:normal;">W</div>
<div style="position:absolute;left:976px;top:104px;width:1px;height:12px;background:#c6cbd2"></div>
<div class="t" style="left:994.1340179443359px;top:111.16px;font-size:8.6px;color:#3a3d44;font-weight:normal;">X</div>
<svg style="position:absolute;left:7px;top:106px" width="9" height="9" viewBox="0 0 9 9"><path d="M8 0V8H0Z" fill="#c3c8cf"/></svg>
<div style="position:absolute;left:0px;top:116.6px;width:17.4px;height:396px;background:#e2e5ea"></div>
<div style="position:absolute;left:17px;top:104px;width:1px;height:409px;background:#c2c7ce"></div>
<div style="position:absolute;left:0px;top:130px;width:17px;height:11px;background:linear-gradient(#fce7a8,#f8d885 55%,#f5cf72)"></div>
<div style="position:absolute;left:16px;top:130px;width:1px;height:11px;background:#efc060"></div>
<div style="position:absolute;left:18px;top:129px;width:969px;height:1px;background:#e6e7e8"></div>
<div class="t" style="left:6.871112060546874px;top:123.23px;font-size:8.4px;color:#3c3c40;font-weight:normal;">1</div>
<div style="position:absolute;left:0px;top:129px;width:17px;height:1px;background:#c9ced5"></div>
<div style="position:absolute;left:59px;top:117px;width:1px;height:12px;background:#e6e7e8"></div>
<div style="position:absolute;left:100px;top:117px;width:1px;height:12px;background:#e6e7e8"></div>
<div style="position:absolute;left:142px;top:117px;width:1px;height:12px;background:#e6e7e8"></div>
<div style="position:absolute;left:184px;top:117px;width:1px;height:12px;background:#e6e7e8"></div>
<div style="position:absolute;left:225px;top:117px;width:1px;height:12px;background:#e6e7e8"></div>
<div style="position:absolute;left:267px;top:117px;width:1px;height:12px;background:#e6e7e8"></div>
<div style="position:absolute;left:309px;top:117px;width:1px;height:12px;background:#e6e7e8"></div>
<div style="position:absolute;left:350px;top:117px;width:1px;height:12px;background:#e6e7e8"></div>
<div style="position:absolute;left:392px;top:117px;width:1px;height:12px;background:#e6e7e8"></div>
<div style="position:absolute;left:434px;top:117px;width:1px;height:12px;background:#e6e7e8"></div>
<div style="position:absolute;left:475px;top:117px;width:1px;height:12px;background:#e6e7e8"></div>
<div style="position:absolute;left:517px;top:117px;width:1px;height:12px;background:#e6e7e8"></div>
<div style="position:absolute;left:559px;top:117px;width:1px;height:12px;background:#e6e7e8"></div>
<div style="position:absolute;left:600px;top:117px;width:1px;height:12px;background:#e6e7e8"></div>
<div style="position:absolute;left:642px;top:117px;width:1px;height:12px;background:#e6e7e8"></div>
<div style="position:absolute;left:684px;top:117px;width:1px;height:12px;background:#e6e7e8"></div>
<div style="position:absolute;left:725px;top:117px;width:1px;height:12px;background:#e6e7e8"></div>
<div style="position:absolute;left:767px;top:117px;width:1px;height:12px;background:#e6e7e8"></div>
<div style="position:absolute;left:809px;top:117px;width:1px;height:12px;background:#e6e7e8"></div>
<div style="position:absolute;left:851px;top:117px;width:1px;height:12px;background:#e6e7e8"></div>
<div style="position:absolute;left:892px;top:117px;width:1px;height:12px;background:#e6e7e8"></div>
<div style="position:absolute;left:934px;top:117px;width:1px;height:12px;background:#e6e7e8"></div>
<div style="position:absolute;left:976px;top:117px;width:1px;height:12px;background:#e6e7e8"></div>
<div class="t" style="left:19px;top:124.29px;font-size:8.2px;color:#1e1e1e;font-weight:normal;transform:scaleX(0.9678);transform-origin:0 0;">#CODE</div>
<div class="t" style="left:61px;top:124.29px;font-size:8.2px;color:#1e1e1e;font-weight:normal;transform:scaleX(0.9543);transform-origin:0 0;">ENGLISH</div>
<div class="t" style="left:102px;top:124.29px;font-size:8.2px;color:#1e1e1e;font-weight:normal;transform:scaleX(0.9615);transform-origin:0 0;">FRENCH</div>
<div class="t" style="left:144px;top:124.29px;font-size:8.2px;color:#1e1e1e;font-weight:normal;transform:scaleX(0.9823);transform-origin:0 0;">GERMAN</div>
<div class="t" style="left:227px;top:124.29px;font-size:8.2px;color:#1e1e1e;font-weight:normal;transform:scaleX(0.9565);transform-origin:0 0;">SPANISH</div>
<div class="t" style="left:602.8px;top:124.29px;font-size:8.2px;color:#1e1e1e;font-weight:bold;transform:scaleX(0.9883);transform-origin:0 0;">x</div>
<div style="position:absolute;left:18px;top:141px;width:969px;height:1px;background:#e6e7e8"></div>
<div class="t" style="left:6.871112060546874px;top:135.73px;font-size:8.4px;color:#3c3c40;font-weight:normal;">2</div>
<div style="position:absolute;left:0px;top:141px;width:17px;height:1px;background:#c9ced5"></div>
<div style="position:absolute;left:59px;top:130px;width:1px;height:11px;background:#e6e7e8"></div>
<div style="position:absolute;left:100px;top:130px;width:1px;height:11px;background:#e6e7e8"></div>
<div style="position:absolute;left:142px;top:130px;width:1px;height:11px;background:#e6e7e8"></div>
<div style="position:absolute;left:184px;top:130px;width:1px;height:11px;background:#e6e7e8"></div>
<div style="position:absolute;left:225px;top:130px;width:1px;height:11px;background:#e6e7e8"></div>
<div style="position:absolute;left:267px;top:130px;width:1px;height:11px;background:#e6e7e8"></div>
<div style="position:absolute;left:309px;top:130px;width:1px;height:11px;background:#e6e7e8"></div>
<div style="position:absolute;left:350px;top:130px;width:1px;height:11px;background:#e6e7e8"></div>
<div style="position:absolute;left:392px;top:130px;width:1px;height:11px;background:#e6e7e8"></div>
<div style="position:absolute;left:434px;top:130px;width:1px;height:11px;background:#e6e7e8"></div>
<div style="position:absolute;left:475px;top:130px;width:1px;height:11px;background:#e6e7e8"></div>
<div style="position:absolute;left:517px;top:130px;width:1px;height:11px;background:#e6e7e8"></div>
<div style="position:absolute;left:559px;top:130px;width:1px;height:11px;background:#e6e7e8"></div>
<div style="position:absolute;left:600px;top:130px;width:1px;height:11px;background:#e6e7e8"></div>
<div style="position:absolute;left:642px;top:130px;width:1px;height:11px;background:#e6e7e8"></div>
<div style="position:absolute;left:684px;top:130px;width:1px;height:11px;background:#e6e7e8"></div>
<div style="position:absolute;left:725px;top:130px;width:1px;height:11px;background:#e6e7e8"></div>
<div style="position:absolute;left:767px;top:130px;width:1px;height:11px;background:#e6e7e8"></div>
<div style="position:absolute;left:809px;top:130px;width:1px;height:11px;background:#e6e7e8"></div>
<div style="position:absolute;left:851px;top:130px;width:1px;height:11px;background:#e6e7e8"></div>
<div style="position:absolute;left:892px;top:130px;width:1px;height:11px;background:#e6e7e8"></div>
<div style="position:absolute;left:934px;top:130px;width:1px;height:11px;background:#e6e7e8"></div>
<div style="position:absolute;left:976px;top:130px;width:1px;height:11px;background:#e6e7e8"></div>
<div class="t" style="left:602.8px;top:136.79px;font-size:8.2px;color:#1e1e1e;font-weight:bold;transform:scaleX(0.9883);transform-origin:0 0;">x</div>
<div class="t" style="left:607.2px;top:137.46px;font-size:8px;color:#1e1e1e;font-weight:bold;transform:scaleX(0.8098);transform-origin:0 0;">,</div>
<div style="position:absolute;left:18px;top:129px;width:41px;height:13px;overflow:hidden">
<div class="t" style="left:1px;top:7.79px;font-size:8.2px;color:#1e1e1e;transform:scaleX(1.0400);transform-origin:0 0">ashbringer</div></div>
<div class="t" style="left:61px;top:136.79px;font-size:8.2px;color:#1e1e1e;font-weight:normal;transform:scaleX(1.0850);transform-origin:0 0;">Пепел</div>
<div style="position:absolute;left:18px;top:154px;width:969px;height:1px;background:#e6e7e8"></div>
<div class="t" style="left:6.871112060546874px;top:148.23px;font-size:8.4px;color:#3c3c40;font-weight:normal;">3</div>
<div style="position:absolute;left:0px;top:154px;width:17px;height:1px;background:#c9ced5"></div>
<div style="position:absolute;left:59px;top:142px;width:1px;height:12px;background:#e6e7e8"></div>
<div style="position:absolute;left:434px;top:142px;width:1px;height:12px;background:#e6e7e8"></div>
<div style="position:absolute;left:475px;top:142px;width:1px;height:12px;background:#e6e7e8"></div>
<div style="position:absolute;left:517px;top:142px;width:1px;height:12px;background:#e6e7e8"></div>
<div style="position:absolute;left:559px;top:142px;width:1px;height:12px;background:#e6e7e8"></div>
<div style="position:absolute;left:600px;top:142px;width:1px;height:12px;background:#e6e7e8"></div>
<div style="position:absolute;left:642px;top:142px;width:1px;height:12px;background:#e6e7e8"></div>
<div style="position:absolute;left:684px;top:142px;width:1px;height:12px;background:#e6e7e8"></div>
<div style="position:absolute;left:725px;top:142px;width:1px;height:12px;background:#e6e7e8"></div>
<div style="position:absolute;left:767px;top:142px;width:1px;height:12px;background:#e6e7e8"></div>
<div style="position:absolute;left:809px;top:142px;width:1px;height:12px;background:#e6e7e8"></div>
<div style="position:absolute;left:851px;top:142px;width:1px;height:12px;background:#e6e7e8"></div>
<div style="position:absolute;left:892px;top:142px;width:1px;height:12px;background:#e6e7e8"></div>
<div style="position:absolute;left:934px;top:142px;width:1px;height:12px;background:#e6e7e8"></div>
<div style="position:absolute;left:976px;top:142px;width:1px;height:12px;background:#e6e7e8"></div>
<div class="t" style="left:602.8px;top:149.29px;font-size:8.2px;color:#1e1e1e;font-weight:bold;transform:scaleX(0.9883);transform-origin:0 0;">x</div>
<div class="t" style="left:607.2px;top:149.96px;font-size:8px;color:#1e1e1e;font-weight:bold;transform:scaleX(0.8098);transform-origin:0 0;">,</div>
<div style="position:absolute;left:18px;top:141px;width:41px;height:13px;overflow:hidden">
<div class="t" style="left:1px;top:8.29px;font-size:8.2px;color:#1e1e1e;transform:scaleX(1.0400);transform-origin:0 0">ashbringer_desc</div></div>
<div class="t" style="left:61px;top:149.29px;font-size:8.2px;color:#1e1e1e;font-weight:normal;transform:scaleX(1.0741);transform-origin:0 0;">Величественный валирийский меч с золотой рукоятью и красной кожаной рукояткой.</div>
<div style="position:absolute;left:18px;top:166px;width:969px;height:1px;background:#e6e7e8"></div>
<div class="t" style="left:6.871112060546874px;top:160.73px;font-size:8.4px;color:#3c3c40;font-weight:normal;">4</div>
<div style="position:absolute;left:0px;top:166px;width:17px;height:1px;background:#c9ced5"></div>
<div style="position:absolute;left:59px;top:155px;width:1px;height:11px;background:#e6e7e8"></div>
<div style="position:absolute;left:100px;top:155px;width:1px;height:11px;background:#e6e7e8"></div>
<div style="position:absolute;left:142px;top:155px;width:1px;height:11px;background:#e6e7e8"></div>
<div style="position:absolute;left:184px;top:155px;width:1px;height:11px;background:#e6e7e8"></div>
<div style="position:absolute;left:225px;top:155px;width:1px;height:11px;background:#e6e7e8"></div>
<div style="position:absolute;left:267px;top:155px;width:1px;height:11px;background:#e6e7e8"></div>
<div style="position:absolute;left:309px;top:155px;width:1px;height:11px;background:#e6e7e8"></div>
<div style="position:absolute;left:350px;top:155px;width:1px;height:11px;background:#e6e7e8"></div>
<div style="position:absolute;left:392px;top:155px;width:1px;height:11px;background:#e6e7e8"></div>
<div style="position:absolute;left:434px;top:155px;width:1px;height:11px;background:#e6e7e8"></div>
<div style="position:absolute;left:475px;top:155px;width:1px;height:11px;background:#e6e7e8"></div>
<div style="position:absolute;left:517px;top:155px;width:1px;height:11px;background:#e6e7e8"></div>
<div style="position:absolute;left:559px;top:155px;width:1px;height:11px;background:#e6e7e8"></div>
<div style="position:absolute;left:600px;top:155px;width:1px;height:11px;background:#e6e7e8"></div>
<div style="position:absolute;left:642px;top:155px;width:1px;height:11px;background:#e6e7e8"></div>
<div style="position:absolute;left:684px;top:155px;width:1px;height:11px;background:#e6e7e8"></div>
<div style="position:absolute;left:725px;top:155px;width:1px;height:11px;background:#e6e7e8"></div>
<div style="position:absolute;left:767px;top:155px;width:1px;height:11px;background:#e6e7e8"></div>
<div style="position:absolute;left:809px;top:155px;width:1px;height:11px;background:#e6e7e8"></div>
<div style="position:absolute;left:851px;top:155px;width:1px;height:11px;background:#e6e7e8"></div>
<div style="position:absolute;left:892px;top:155px;width:1px;height:11px;background:#e6e7e8"></div>
<div style="position:absolute;left:934px;top:155px;width:1px;height:11px;background:#e6e7e8"></div>
<div style="position:absolute;left:976px;top:155px;width:1px;height:11px;background:#e6e7e8"></div>
<div class="t" style="left:602.8px;top:161.79px;font-size:8.2px;color:#1e1e1e;font-weight:bold;transform:scaleX(0.9883);transform-origin:0 0;">x</div>
<div class="t" style="left:607.2px;top:162.46px;font-size:8px;color:#1e1e1e;font-weight:bold;transform:scaleX(0.8098);transform-origin:0 0;">,</div>
<div style="position:absolute;left:18px;top:154px;width:41px;height:13px;overflow:hidden">
<div class="t" style="left:1px;top:7.79px;font-size:8.2px;color:#1e1e1e;transform:scaleX(1.0400);transform-origin:0 0">avarice</div></div>
<div class="t" style="left:61px;top:161.79px;font-size:8.2px;color:#1e1e1e;font-weight:normal;transform:scaleX(1.0400);transform-origin:0 0;">Avarice</div>
<div style="position:absolute;left:18px;top:179px;width:969px;height:1px;background:#e6e7e8"></div>
<div class="t" style="left:6.871112060546874px;top:173.23px;font-size:8.4px;color:#3c3c40;font-weight:normal;">5</div>
<div style="position:absolute;left:0px;top:179px;width:17px;height:1px;background:#c9ced5"></div>
<div style="position:absolute;left:59px;top:167px;width:1px;height:12px;background:#e6e7e8"></div>
<div style="position:absolute;left:225px;top:167px;width:1px;height:12px;background:#e6e7e8"></div>
<div style="position:absolute;left:267px;top:167px;width:1px;height:12px;background:#e6e7e8"></div>
<div style="position:absolute;left:309px;top:167px;width:1px;height:12px;background:#e6e7e8"></div>
<div style="position:absolute;left:350px;top:167px;width:1px;height:12px;background:#e6e7e8"></div>
<div style="position:absolute;left:392px;top:167px;width:1px;height:12px;background:#e6e7e8"></div>
<div style="position:absolute;left:434px;top:167px;width:1px;height:12px;background:#e6e7e8"></div>
<div style="position:absolute;left:475px;top:167px;width:1px;height:12px;background:#e6e7e8"></div>
<div style="position:absolute;left:517px;top:167px;width:1px;height:12px;background:#e6e7e8"></div>
<div style="position:absolute;left:559px;top:167px;width:1px;height:12px;background:#e6e7e8"></div>
<div style="position:absolute;left:600px;top:167px;width:1px;height:12px;background:#e6e7e8"></div>
<div style="position:absolute;left:642px;top:167px;width:1px;height:12px;background:#e6e7e8"></div>
<div style="position:absolute;left:684px;top:167px;width:1px;height:12px;background:#e6e7e8"></div>
<div style="position:absolute;left:725px;top:167px;width:1px;height:12px;background:#e6e7e8"></div>
<div style="position:absolute;left:767px;top:167px;width:1px;height:12px;background:#e6e7e8"></div>
<div style="position:absolute;left:809px;top:167px;width:1px;height:12px;background:#e6e7e8"></div>
<div style="position:absolute;left:851px;top:167px;width:1px;height:12px;background:#e6e7e8"></div>
<div style="position:absolute;left:892px;top:167px;width:1px;height:12px;background:#e6e7e8"></div>
<div style="position:absolute;left:934px;top:167px;width:1px;height:12px;background:#e6e7e8"></div>
<div style="position:absolute;left:976px;top:167px;width:1px;height:12px;background:#e6e7e8"></div>
<div class="t" style="left:602.8px;top:174.29px;font-size:8.2px;color:#1e1e1e;font-weight:bold;transform:scaleX(0.9883);transform-origin:0 0;">x</div>
<div class="t" style="left:607.2px;top:174.96px;font-size:8px;color:#1e1e1e;font-weight:bold;transform:scaleX(0.8098);transform-origin:0 0;">,</div>
<div style="position:absolute;left:18px;top:166px;width:41px;height:13px;overflow:hidden">
<div class="t" style="left:1px;top:8.29px;font-size:8.2px;color:#1e1e1e;transform:scaleX(1.0400);transform-origin:0 0">avarice_desc</div></div>
<div class="t" style="left:61px;top:174.29px;font-size:8.2px;color:#1e1e1e;font-weight:normal;transform:scaleX(1.0647);transform-origin:0 0;">Валирийский меч с серебряным щитом.</div>
<div style="position:absolute;left:18px;top:191px;width:969px;height:1px;background:#e6e7e8"></div>
<div class="t" style="left:6.871112060546874px;top:185.73px;font-size:8.4px;color:#3c3c40;font-weight:normal;">6</div>
<div style="position:absolute;left:0px;top:191px;width:17px;height:1px;background:#c9ced5"></div>
<div style="position:absolute;left:59px;top:180px;width:1px;height:11px;background:#e6e7e8"></div>
<div style="position:absolute;left:100px;top:180px;width:1px;height:11px;background:#e6e7e8"></div>
<div style="position:absolute;left:142px;top:180px;width:1px;height:11px;background:#e6e7e8"></div>
<div style="position:absolute;left:184px;top:180px;width:1px;height:11px;background:#e6e7e8"></div>
<div style="position:absolute;left:225px;top:180px;width:1px;height:11px;background:#e6e7e8"></div>
<div style="position:absolute;left:267px;top:180px;width:1px;height:11px;background:#e6e7e8"></div>
<div style="position:absolute;left:309px;top:180px;width:1px;height:11px;background:#e6e7e8"></div>
<div style="position:absolute;left:350px;top:180px;width:1px;height:11px;background:#e6e7e8"></div>
<div style="position:absolute;left:392px;top:180px;width:1px;height:11px;background:#e6e7e8"></div>
<div style="position:absolute;left:434px;top:180px;width:1px;height:11px;background:#e6e7e8"></div>
<div style="position:absolute;left:475px;top:180px;width:1px;height:11px;background:#e6e7e8"></div>
<div style="position:absolute;left:517px;top:180px;width:1px;height:11px;background:#e6e7e8"></div>
<div style="position:absolute;left:559px;top:180px;width:1px;height:11px;background:#e6e7e8"></div>
<div style="position:absolute;left:600px;top:180px;width:1px;height:11px;background:#e6e7e8"></div>
<div style="position:absolute;left:642px;top:180px;width:1px;height:11px;background:#e6e7e8"></div>
<div style="position:absolute;left:684px;top:180px;width:1px;height:11px;background:#e6e7e8"></div>
<div style="position:absolute;left:725px;top:180px;width:1px;height:11px;background:#e6e7e8"></div>
<div style="position:absolute;left:767px;top:180px;width:1px;height:11px;background:#e6e7e8"></div>
<div style="position:absolute;left:809px;top:180px;width:1px;height:11px;background:#e6e7e8"></div>
<div style="position:absolute;left:851px;top:180px;width:1px;height:11px;background:#e6e7e8"></div>
<div style="position:absolute;left:892px;top:180px;width:1px;height:11px;background:#e6e7e8"></div>
<div style="position:absolute;left:934px;top:180px;width:1px;height:11px;background:#e6e7e8"></div>
<div style="position:absolute;left:976px;top:180px;width:1px;height:11px;background:#e6e7e8"></div>
<div class="t" style="left:602.8px;top:186.79px;font-size:8.2px;color:#1e1e1e;font-weight:bold;transform:scaleX(0.9883);transform-origin:0 0;">x</div>
<div class="t" style="left:607.2px;top:187.46px;font-size:8px;color:#1e1e1e;font-weight:bold;transform:scaleX(0.8098);transform-origin:0 0;">,</div>
<div style="position:absolute;left:18px;top:179px;width:41px;height:13px;overflow:hidden">
<div class="t" style="left:1px;top:7.79px;font-size:8.2px;color:#1e1e1e;transform:scaleX(1.0400);transform-origin:0 0">avenger</div></div>
<div class="t" style="left:61px;top:186.79px;font-size:8.2px;color:#1e1e1e;font-weight:normal;transform:scaleX(1.0400);transform-origin:0 0;">Avenger</div>
<div style="position:absolute;left:18px;top:204px;width:969px;height:1px;background:#e6e7e8"></div>
<div class="t" style="left:6.871112060546874px;top:198.23px;font-size:8.4px;color:#3c3c40;font-weight:normal;">7</div>
<div style="position:absolute;left:0px;top:204px;width:17px;height:1px;background:#c9ced5"></div>
<div style="position:absolute;left:59px;top:192px;width:1px;height:12px;background:#e6e7e8"></div>
<div style="position:absolute;left:517px;top:192px;width:1px;height:12px;background:#e6e7e8"></div>
<div style="position:absolute;left:559px;top:192px;width:1px;height:12px;background:#e6e7e8"></div>
<div style="position:absolute;left:600px;top:192px;width:1px;height:12px;background:#e6e7e8"></div>
<div style="position:absolute;left:642px;top:192px;width:1px;height:12px;background:#e6e7e8"></div>
<div style="position:absolute;left:684px;top:192px;width:1px;height:12px;background:#e6e7e8"></div>
<div style="position:absolute;left:725px;top:192px;width:1px;height:12px;background:#e6e7e8"></div>
<div style="position:absolute;left:767px;top:192px;width:1px;height:12px;background:#e6e7e8"></div>
<div style="position:absolute;left:809px;top:192px;width:1px;height:12px;background:#e6e7e8"></div>
<div style="position:absolute;left:851px;top:192px;width:1px;height:12px;background:#e6e7e8"></div>
<div style="position:absolute;left:892px;top:192px;width:1px;height:12px;background:#e6e7e8"></div>
<div style="position:absolute;left:934px;top:192px;width:1px;height:12px;background:#e6e7e8"></div>
<div style="position:absolute;left:976px;top:192px;width:1px;height:12px;background:#e6e7e8"></div>
<div class="t" style="left:602.8px;top:199.29px;font-size:8.2px;color:#1e1e1e;font-weight:bold;transform:scaleX(0.9883);transform-origin:0 0;">x</div>
<div class="t" style="left:607.2px;top:199.96px;font-size:8px;color:#1e1e1e;font-weight:bold;transform:scaleX(0.8098);transform-origin:0 0;">,</div>
<div style="position:absolute;left:18px;top:191px;width:41px;height:13px;overflow:hidden">
<div class="t" style="left:1px;top:8.29px;font-size:8.2px;color:#1e1e1e;transform:scaleX(1.0400);transform-origin:0 0">avenger_desc</div></div>
<div class="t" style="left:61px;top:199.29px;font-size:8.2px;color:#1e1e1e;font-weight:normal;transform:scaleX(1.0719);transform-origin:0 0;">Сбалансированный меч из валирийской стали с рукояткой из черной кожи и двумя крючками на рукояти.</div>
<div style="position:absolute;left:18px;top:216px;width:969px;height:1px;background:#e6e7e8"></div>
<div class="t" style="left:6.871112060546874px;top:210.73px;font-size:8.4px;color:#3c3c40;font-weight:normal;">8</div>
<div style="position:absolute;left:0px;top:216px;width:17px;height:1px;background:#c9ced5"></div>
<div style="position:absolute;left:59px;top:205px;width:1px;height:11px;background:#e6e7e8"></div>
<div style="position:absolute;left:100px;top:205px;width:1px;height:11px;background:#e6e7e8"></div>
<div style="position:absolute;left:142px;top:205px;width:1px;height:11px;background:#e6e7e8"></div>
<div style="position:absolute;left:184px;top:205px;width:1px;height:11px;background:#e6e7e8"></div>
<div style="position:absolute;left:225px;top:205px;width:1px;height:11px;background:#e6e7e8"></div>
<div style="position:absolute;left:267px;top:205px;width:1px;height:11px;background:#e6e7e8"></div>
<div style="position:absolute;left:309px;top:205px;width:1px;height:11px;background:#e6e7e8"></div>
<div style="position:absolute;left:350px;top:205px;width:1px;height:11px;background:#e6e7e8"></div>
<div style="position:absolute;left:392px;top:205px;width:1px;height:11px;background:#e6e7e8"></div>
<div style="position:absolute;left:434px;top:205px;width:1px;height:11px;background:#e6e7e8"></div>
<div style="position:absolute;left:475px;top:205px;width:1px;height:11px;background:#e6e7e8"></div>
<div style="position:absolute;left:517px;top:205px;width:1px;height:11px;background:#e6e7e8"></div>
<div style="position:absolute;left:559px;top:205px;width:1px;height:11px;background:#e6e7e8"></div>
<div style="position:absolute;left:600px;top:205px;width:1px;height:11px;background:#e6e7e8"></div>
<div style="position:absolute;left:642px;top:205px;width:1px;height:11px;background:#e6e7e8"></div>
<div style="position:absolute;left:684px;top:205px;width:1px;height:11px;background:#e6e7e8"></div>
<div style="position:absolute;left:725px;top:205px;width:1px;height:11px;background:#e6e7e8"></div>
<div style="position:absolute;left:767px;top:205px;width:1px;height:11px;background:#e6e7e8"></div>
<div style="position:absolute;left:809px;top:205px;width:1px;height:11px;background:#e6e7e8"></div>
<div style="position:absolute;left:851px;top:205px;width:1px;height:11px;background:#e6e7e8"></div>
<div style="position:absolute;left:892px;top:205px;width:1px;height:11px;background:#e6e7e8"></div>
<div style="position:absolute;left:934px;top:205px;width:1px;height:11px;background:#e6e7e8"></div>
<div style="position:absolute;left:976px;top:205px;width:1px;height:11px;background:#e6e7e8"></div>
<div class="t" style="left:602.8px;top:211.79px;font-size:8.2px;color:#1e1e1e;font-weight:bold;transform:scaleX(0.9883);transform-origin:0 0;">x</div>
<div class="t" style="left:607.2px;top:212.46px;font-size:8px;color:#1e1e1e;font-weight:bold;transform:scaleX(0.8098);transform-origin:0 0;">,</div>
<div style="position:absolute;left:18px;top:204px;width:41px;height:13px;overflow:hidden">
<div class="t" style="left:1px;top:7.79px;font-size:8.2px;color:#1e1e1e;transform:scaleX(1.0400);transform-origin:0 0">calibur</div></div>
<div class="t" style="left:61px;top:211.79px;font-size:8.2px;color:#1e1e1e;font-weight:normal;transform:scaleX(1.0400);transform-origin:0 0;">Calibur</div>
<div style="position:absolute;left:18px;top:229px;width:969px;height:1px;background:#e6e7e8"></div>
<div class="t" style="left:6.871112060546874px;top:223.23px;font-size:8.4px;color:#3c3c40;font-weight:normal;">9</div>
<div style="position:absolute;left:0px;top:229px;width:17px;height:1px;background:#c9ced5"></div>
<div style="position:absolute;left:59px;top:217px;width:1px;height:12px;background:#e6e7e8"></div>
<div style="position:absolute;left:434px;top:217px;width:1px;height:12px;background:#e6e7e8"></div>
<div style="position:absolute;left:475px;top:217px;width:1px;height:12px;background:#e6e7e8"></div>
<div style="position:absolute;left:517px;top:217px;width:1px;height:12px;background:#e6e7e8"></div>
<div style="position:absolute;left:559px;top:217px;width:1px;height:12px;background:#e6e7e8"></div>
<div style="position:absolute;left:600px;top:217px;width:1px;height:12px;background:#e6e7e8"></div>
<div style="position:absolute;left:642px;top:217px;width:1px;height:12px;background:#e6e7e8"></div>
<div style="position:absolute;left:684px;top:217px;width:1px;height:12px;background:#e6e7e8"></div>
<div style="position:absolute;left:725px;top:217px;width:1px;height:12px;background:#e6e7e8"></div>
<div style="position:absolute;left:767px;top:217px;width:1px;height:12px;background:#e6e7e8"></div>
<div style="position:absolute;left:809px;top:217px;width:1px;height:12px;background:#e6e7e8"></div>
<div style="position:absolute;left:851px;top:217px;width:1px;height:12px;background:#e6e7e8"></div>
<div style="position:absolute;left:892px;top:217px;width:1px;height:12px;background:#e6e7e8"></div>
<div style="position:absolute;left:934px;top:217px;width:1px;height:12px;background:#e6e7e8"></div>
<div style="position:absolute;left:976px;top:217px;width:1px;height:12px;background:#e6e7e8"></div>
<div class="t" style="left:602.8px;top:224.29px;font-size:8.2px;color:#1e1e1e;font-weight:bold;transform:scaleX(0.9883);transform-origin:0 0;">x</div>
<div class="t" style="left:607.2px;top:224.96px;font-size:8px;color:#1e1e1e;font-weight:bold;transform:scaleX(0.8098);transform-origin:0 0;">,</div>
<div style="position:absolute;left:18px;top:216px;width:41px;height:13px;overflow:hidden">
<div class="t" style="left:1px;top:8.29px;font-size:8.2px;color:#1e1e1e;transform:scaleX(1.0400);transform-origin:0 0">calibur_desc</div></div>
<div class="t" style="left:61px;top:224.29px;font-size:8.2px;color:#1e1e1e;font-weight:normal;transform:scaleX(1.0565);transform-origin:0 0;">Прекрасный валирийский меч, пронизанный таинственным светоотражающим клинком.</div>
<div style="position:absolute;left:18px;top:241px;width:969px;height:1px;background:#e6e7e8"></div>
<div class="t" style="left:4.542224121093749px;top:235.73px;font-size:8.4px;color:#3c3c40;font-weight:normal;">10</div>
<div style="position:absolute;left:0px;top:241px;width:17px;height:1px;background:#c9ced5"></div>
<div style="position:absolute;left:59px;top:230px;width:1px;height:11px;background:#e6e7e8"></div>
<div style="position:absolute;left:100px;top:230px;width:1px;height:11px;background:#e6e7e8"></div>
<div style="position:absolute;left:142px;top:230px;width:1px;height:11px;background:#e6e7e8"></div>
<div style="position:absolute;left:184px;top:230px;width:1px;height:11px;background:#e6e7e8"></div>
<div style="position:absolute;left:225px;top:230px;width:1px;height:11px;background:#e6e7e8"></div>
<div style="position:absolute;left:267px;top:230px;width:1px;height:11px;background:#e6e7e8"></div>
<div style="position:absolute;left:309px;top:230px;width:1px;height:11px;background:#e6e7e8"></div>
<div style="position:absolute;left:350px;top:230px;width:1px;height:11px;background:#e6e7e8"></div>
<div style="position:absolute;left:392px;top:230px;width:1px;height:11px;background:#e6e7e8"></div>
<div style="position:absolute;left:434px;top:230px;width:1px;height:11px;background:#e6e7e8"></div>
<div style="position:absolute;left:475px;top:230px;width:1px;height:11px;background:#e6e7e8"></div>
<div style="position:absolute;left:517px;top:230px;width:1px;height:11px;background:#e6e7e8"></div>
<div style="position:absolute;left:559px;top:230px;width:1px;height:11px;background:#e6e7e8"></div>
<div style="position:absolute;left:600px;top:230px;width:1px;height:11px;background:#e6e7e8"></div>
<div style="position:absolute;left:642px;top:230px;width:1px;height:11px;background:#e6e7e8"></div>
<div style="position:absolute;left:684px;top:230px;width:1px;height:11px;background:#e6e7e8"></div>
<div style="position:absolute;left:725px;top:230px;width:1px;height:11px;background:#e6e7e8"></div>
<div style="position:absolute;left:767px;top:230px;width:1px;height:11px;background:#e6e7e8"></div>
<div style="position:absolute;left:809px;top:230px;width:1px;height:11px;background:#e6e7e8"></div>
<div style="position:absolute;left:851px;top:230px;width:1px;height:11px;background:#e6e7e8"></div>
<div style="position:absolute;left:892px;top:230px;width:1px;height:11px;background:#e6e7e8"></div>
<div style="position:absolute;left:934px;top:230px;width:1px;height:11px;background:#e6e7e8"></div>
<div style="position:absolute;left:976px;top:230px;width:1px;height:11px;background:#e6e7e8"></div>
<div class="t" style="left:602.8px;top:236.79px;font-size:8.2px;color:#1e1e1e;font-weight:bold;transform:scaleX(0.9883);transform-origin:0 0;">x</div>
<div class="t" style="left:607.2px;top:237.46px;font-size:8px;color:#1e1e1e;font-weight:bold;transform:scaleX(0.8098);transform-origin:0 0;">,</div>
<div style="position:absolute;left:18px;top:229px;width:41px;height:13px;overflow:hidden">
<div class="t" style="left:1px;top:7.79px;font-size:8.2px;color:#1e1e1e;transform:scaleX(1.0400);transform-origin:0 0">dusk</div></div>
<div class="t" style="left:61px;top:236.79px;font-size:8.2px;color:#1e1e1e;font-weight:normal;transform:scaleX(1.0400);transform-origin:0 0;">Dusk</div>
<div style="position:absolute;left:18px;top:254px;width:969px;height:1px;background:#e6e7e8"></div>
<div class="t" style="left:4.8535720825195305px;top:248.23px;font-size:8.4px;color:#3c3c40;font-weight:normal;">11</div>
<div style="position:absolute;left:0px;top:254px;width:17px;height:1px;background:#c9ced5"></div>
<div style="position:absolute;left:59px;top:242px;width:1px;height:12px;background:#e6e7e8"></div>
<div style="position:absolute;left:434px;top:242px;width:1px;height:12px;background:#e6e7e8"></div>
<div style="position:absolute;left:475px;top:242px;width:1px;height:12px;background:#e6e7e8"></div>
<div style="position:absolute;left:517px;top:242px;width:1px;height:12px;background:#e6e7e8"></div>
<div style="position:absolute;left:559px;top:242px;width:1px;height:12px;background:#e6e7e8"></div>
<div style="position:absolute;left:600px;top:242px;width:1px;height:12px;background:#e6e7e8"></div>
<div style="position:absolute;left:642px;top:242px;width:1px;height:12px;background:#e6e7e8"></div>
<div style="position:absolute;left:684px;top:242px;width:1px;height:12px;background:#e6e7e8"></div>
<div style="position:absolute;left:725px;top:242px;width:1px;height:12px;background:#e6e7e8"></div>
<div style="position:absolute;left:767px;top:242px;width:1px;height:12px;background:#e6e7e8"></div>
<div style="position:absolute;left:809px;top:242px;width:1px;height:12px;background:#e6e7e8"></div>
<div style="position:absolute;left:851px;top:242px;width:1px;height:12px;background:#e6e7e8"></div>
<div style="position:absolute;left:892px;top:242px;width:1px;height:12px;background:#e6e7e8"></div>
<div style="position:absolute;left:934px;top:242px;width:1px;height:12px;background:#e6e7e8"></div>
<div style="position:absolute;left:976px;top:242px;width:1px;height:12px;background:#e6e7e8"></div>
<div class="t" style="left:602.8px;top:249.29px;font-size:8.2px;color:#1e1e1e;font-weight:bold;transform:scaleX(0.9883);transform-origin:0 0;">x</div>
<div class="t" style="left:607.2px;top:249.96px;font-size:8px;color:#1e1e1e;font-weight:bold;transform:scaleX(0.8098);transform-origin:0 0;">,</div>
<div style="position:absolute;left:18px;top:241px;width:41px;height:13px;overflow:hidden">
<div class="t" style="left:1px;top:8.29px;font-size:8.2px;color:#1e1e1e;transform:scaleX(1.0400);transform-origin:0 0">dusk_desc</div></div>
<div class="t" style="left:61px;top:249.29px;font-size:8.2px;color:#1e1e1e;font-weight:normal;transform:scaleX(1.0699);transform-origin:0 0;">Меч из валирийсой стали с вырезанной головой морской змеи, простирающейся от щитка.</div>
<div style="position:absolute;left:18px;top:266px;width:969px;height:1px;background:#e6e7e8"></div>
<div class="t" style="left:4.542224121093749px;top:260.73px;font-size:8.4px;color:#3c3c40;font-weight:normal;">12</div>
<div style="position:absolute;left:0px;top:266px;width:17px;height:1px;background:#c9ced5"></div>
<div style="position:absolute;left:59px;top:255px;width:1px;height:11px;background:#e6e7e8"></div>
<div style="position:absolute;left:100px;top:255px;width:1px;height:11px;background:#e6e7e8"></div>
<div style="position:absolute;left:142px;top:255px;width:1px;height:11px;background:#e6e7e8"></div>
<div style="position:absolute;left:184px;top:255px;width:1px;height:11px;background:#e6e7e8"></div>
<div style="position:absolute;left:225px;top:255px;width:1px;height:11px;background:#e6e7e8"></div>
<div style="position:absolute;left:267px;top:255px;width:1px;height:11px;background:#e6e7e8"></div>
<div style="position:absolute;left:309px;top:255px;width:1px;height:11px;background:#e6e7e8"></div>
<div style="position:absolute;left:350px;top:255px;width:1px;height:11px;background:#e6e7e8"></div>
<div style="position:absolute;left:392px;top:255px;width:1px;height:11px;background:#e6e7e8"></div>
<div style="position:absolute;left:434px;top:255px;width:1px;height:11px;background:#e6e7e8"></div>
<div style="position:absolute;left:475px;top:255px;width:1px;height:11px;background:#e6e7e8"></div>
<div style="position:absolute;left:517px;top:255px;width:1px;height:11px;background:#e6e7e8"></div>
<div style="position:absolute;left:559px;top:255px;width:1px;height:11px;background:#e6e7e8"></div>
<div style="position:absolute;left:600px;top:255px;width:1px;height:11px;background:#e6e7e8"></div>
<div style="position:absolute;left:642px;top:255px;width:1px;height:11px;background:#e6e7e8"></div>
<div style="position:absolute;left:684px;top:255px;width:1px;height:11px;background:#e6e7e8"></div>
<div style="position:absolute;left:725px;top:255px;width:1px;height:11px;background:#e6e7e8"></div>
<div style="position:absolute;left:767px;top:255px;width:1px;height:11px;background:#e6e7e8"></div>
<div style="position:absolute;left:809px;top:255px;width:1px;height:11px;background:#e6e7e8"></div>
<div style="position:absolute;left:851px;top:255px;width:1px;height:11px;background:#e6e7e8"></div>
<div style="position:absolute;left:892px;top:255px;width:1px;height:11px;background:#e6e7e8"></div>
<div style="position:absolute;left:934px;top:255px;width:1px;height:11px;background:#e6e7e8"></div>
<div style="position:absolute;left:976px;top:255px;width:1px;height:11px;background:#e6e7e8"></div>
<div class="t" style="left:602.8px;top:261.79px;font-size:8.2px;color:#1e1e1e;font-weight:bold;transform:scaleX(0.9883);transform-origin:0 0;">x</div>
<div class="t" style="left:607.2px;top:262.46px;font-size:8px;color:#1e1e1e;font-weight:bold;transform:scaleX(0.8098);transform-origin:0 0;">,</div>
<div style="position:absolute;left:18px;top:254px;width:41px;height:13px;overflow:hidden">
<div class="t" style="left:1px;top:7.79px;font-size:8.2px;color:#1e1e1e;transform:scaleX(1.0400);transform-origin:0 0">dustcloud</div></div>
<div class="t" style="left:61px;top:261.79px;font-size:8.2px;color:#1e1e1e;font-weight:normal;transform:scaleX(1.0400);transform-origin:0 0;">Dustcloud</div>
<div style="position:absolute;left:18px;top:279px;width:969px;height:1px;background:#e6e7e8"></div>
<div class="t" style="left:4.542224121093749px;top:273.23px;font-size:8.4px;color:#3c3c40;font-weight:normal;">13</div>
<div style="position:absolute;left:0px;top:279px;width:17px;height:1px;background:#c9ced5"></div>
<div style="position:absolute;left:59px;top:267px;width:1px;height:12px;background:#e6e7e8"></div>
<div style="position:absolute;left:475px;top:267px;width:1px;height:12px;background:#e6e7e8"></div>
<div style="position:absolute;left:517px;top:267px;width:1px;height:12px;background:#e6e7e8"></div>
<div style="position:absolute;left:559px;top:267px;width:1px;height:12px;background:#e6e7e8"></div>
<div style="position:absolute;left:600px;top:267px;width:1px;height:12px;background:#e6e7e8"></div>
<div style="position:absolute;left:642px;top:267px;width:1px;height:12px;background:#e6e7e8"></div>
<div style="position:absolute;left:684px;top:267px;width:1px;height:12px;background:#e6e7e8"></div>
<div style="position:absolute;left:725px;top:267px;width:1px;height:12px;background:#e6e7e8"></div>
<div style="position:absolute;left:767px;top:267px;width:1px;height:12px;background:#e6e7e8"></div>
<div style="position:absolute;left:809px;top:267px;width:1px;height:12px;background:#e6e7e8"></div>
<div style="position:absolute;left:851px;top:267px;width:1px;height:12px;background:#e6e7e8"></div>
<div style="position:absolute;left:892px;top:267px;width:1px;height:12px;background:#e6e7e8"></div>
<div style="position:absolute;left:934px;top:267px;width:1px;height:12px;background:#e6e7e8"></div>
<div style="position:absolute;left:976px;top:267px;width:1px;height:12px;background:#e6e7e8"></div>
<div class="t" style="left:602.8px;top:274.29px;font-size:8.2px;color:#1e1e1e;font-weight:bold;transform:scaleX(0.9883);transform-origin:0 0;">x</div>
<div class="t" style="left:607.2px;top:274.96px;font-size:8px;color:#1e1e1e;font-weight:bold;transform:scaleX(0.8098);transform-origin:0 0;">,</div>
<div style="position:absolute;left:18px;top:266px;width:41px;height:13px;overflow:hidden">
<div class="t" style="left:1px;top:8.29px;font-size:8.2px;color:#1e1e1e;transform:scaleX(1.0400);transform-origin:0 0">dustcloud_desc</div></div>
<div class="t" style="left:61px;top:274.29px;font-size:8.2px;color:#1e1e1e;font-weight:normal;transform:scaleX(1.0774);transform-origin:0 0;">Массивный длинный валирийский меч прикреплен к мрачному композитному стальному щитку.</div>
<div style="position:absolute;left:18px;top:291px;width:969px;height:1px;background:#e6e7e8"></div>
<div class="t" style="left:4.542224121093749px;top:285.73px;font-size:8.4px;color:#3c3c40;font-weight:normal;">14</div>
<div style="position:absolute;left:0px;top:291px;width:17px;height:1px;background:#c9ced5"></div>
<div style="position:absolute;left:59px;top:280px;width:1px;height:11px;background:#e6e7e8"></div>
<div style="position:absolute;left:100px;top:280px;width:1px;height:11px;background:#e6e7e8"></div>
<div style="position:absolute;left:142px;top:280px;width:1px;height:11px;background:#e6e7e8"></div>
<div style="position:absolute;left:184px;top:280px;width:1px;height:11px;background:#e6e7e8"></div>
<div style="position:absolute;left:225px;top:280px;width:1px;height:11px;background:#e6e7e8"></div>
<div style="position:absolute;left:267px;top:280px;width:1px;height:11px;background:#e6e7e8"></div>
<div style="position:absolute;left:309px;top:280px;width:1px;height:11px;background:#e6e7e8"></div>
<div style="position:absolute;left:350px;top:280px;width:1px;height:11px;background:#e6e7e8"></div>
<div style="position:absolute;left:392px;top:280px;width:1px;height:11px;background:#e6e7e8"></div>
<div style="position:absolute;left:434px;top:280px;width:1px;height:11px;background:#e6e7e8"></div>
<div style="position:absolute;left:475px;top:280px;width:1px;height:11px;background:#e6e7e8"></div>
<div style="position:absolute;left:517px;top:280px;width:1px;height:11px;background:#e6e7e8"></div>
<div style="position:absolute;left:559px;top:280px;width:1px;height:11px;background:#e6e7e8"></div>
<div style="position:absolute;left:600px;top:280px;width:1px;height:11px;background:#e6e7e8"></div>
<div style="position:absolute;left:642px;top:280px;width:1px;height:11px;background:#e6e7e8"></div>
<div style="position:absolute;left:684px;top:280px;width:1px;height:11px;background:#e6e7e8"></div>
<div style="position:absolute;left:725px;top:280px;width:1px;height:11px;background:#e6e7e8"></div>
<div style="position:absolute;left:767px;top:280px;width:1px;height:11px;background:#e6e7e8"></div>
<div style="position:absolute;left:809px;top:280px;width:1px;height:11px;background:#e6e7e8"></div>
<div style="position:absolute;left:851px;top:280px;width:1px;height:11px;background:#e6e7e8"></div>
<div style="position:absolute;left:892px;top:280px;width:1px;height:11px;background:#e6e7e8"></div>
<div style="position:absolute;left:934px;top:280px;width:1px;height:11px;background:#e6e7e8"></div>
<div style="position:absolute;left:976px;top:280px;width:1px;height:11px;background:#e6e7e8"></div>
<div class="t" style="left:602.8px;top:286.79px;font-size:8.2px;color:#1e1e1e;font-weight:bold;transform:scaleX(0.9883);transform-origin:0 0;">x</div>
<div class="t" style="left:607.2px;top:287.46px;font-size:8px;color:#1e1e1e;font-weight:bold;transform:scaleX(0.8098);transform-origin:0 0;">,</div>
<div style="position:absolute;left:18px;top:279px;width:41px;height:13px;overflow:hidden">
<div class="t" style="left:1px;top:7.79px;font-size:8.2px;color:#1e1e1e;transform:scaleX(1.0400);transform-origin:0 0">emancipate</div></div>
<div class="t" style="left:61px;top:286.79px;font-size:8.2px;color:#1e1e1e;font-weight:normal;transform:scaleX(1.0400);transform-origin:0 0;">Emancipate</div>
<div style="position:absolute;left:18px;top:304px;width:969px;height:1px;background:#e6e7e8"></div>
<div class="t" style="left:4.542224121093749px;top:298.23px;font-size:8.4px;color:#3c3c40;font-weight:normal;">15</div>
<div style="position:absolute;left:0px;top:304px;width:17px;height:1px;background:#c9ced5"></div>
<div style="position:absolute;left:59px;top:292px;width:1px;height:12px;background:#e6e7e8"></div>
<div style="position:absolute;left:350px;top:292px;width:1px;height:12px;background:#e6e7e8"></div>
<div style="position:absolute;left:392px;top:292px;width:1px;height:12px;background:#e6e7e8"></div>
<div style="position:absolute;left:434px;top:292px;width:1px;height:12px;background:#e6e7e8"></div>
<div style="position:absolute;left:475px;top:292px;width:1px;height:12px;background:#e6e7e8"></div>
<div style="position:absolute;left:517px;top:292px;width:1px;height:12px;background:#e6e7e8"></div>
<div style="position:absolute;left:559px;top:292px;width:1px;height:12px;background:#e6e7e8"></div>
<div style="position:absolute;left:600px;top:292px;width:1px;height:12px;background:#e6e7e8"></div>
<div style="position:absolute;left:642px;top:292px;width:1px;height:12px;background:#e6e7e8"></div>
<div style="position:absolute;left:684px;top:292px;width:1px;height:12px;background:#e6e7e8"></div>
<div style="position:absolute;left:725px;top:292px;width:1px;height:12px;background:#e6e7e8"></div>
<div style="position:absolute;left:767px;top:292px;width:1px;height:12px;background:#e6e7e8"></div>
<div style="position:absolute;left:809px;top:292px;width:1px;height:12px;background:#e6e7e8"></div>
<div style="position:absolute;left:851px;top:292px;width:1px;height:12px;background:#e6e7e8"></div>
<div style="position:absolute;left:892px;top:292px;width:1px;height:12px;background:#e6e7e8"></div>
<div style="position:absolute;left:934px;top:292px;width:1px;height:12px;background:#e6e7e8"></div>
<div style="position:absolute;left:976px;top:292px;width:1px;height:12px;background:#e6e7e8"></div>
<div class="t" style="left:602.8px;top:299.29px;font-size:8.2px;color:#1e1e1e;font-weight:bold;transform:scaleX(0.9883);transform-origin:0 0;">x</div>
<div class="t" style="left:607.2px;top:299.96px;font-size:8px;color:#1e1e1e;font-weight:bold;transform:scaleX(0.8098);transform-origin:0 0;">,</div>
<div style="position:absolute;left:18px;top:291px;width:41px;height:13px;overflow:hidden">
<div class="t" style="left:1px;top:8.29px;font-size:8.2px;color:#1e1e1e;transform:scaleX(1.0400);transform-origin:0 0">emancipate_desc</div></div>
<div class="t" style="left:61px;top:299.29px;font-size:8.2px;color:#1e1e1e;font-weight:normal;transform:scaleX(1.0757);transform-origin:0 0;">Короткий валирийский меч украшен искусным золотым навершием.</div>
<div style="position:absolute;left:18px;top:316px;width:969px;height:1px;background:#e6e7e8"></div>
<div class="t" style="left:4.542224121093749px;top:310.73px;font-size:8.4px;color:#3c3c40;font-weight:normal;">16</div>
<div style="position:absolute;left:0px;top:316px;width:17px;height:1px;background:#c9ced5"></div>
<div style="position:absolute;left:59px;top:305px;width:1px;height:11px;background:#e6e7e8"></div>
<div style="position:absolute;left:100px;top:305px;width:1px;height:11px;background:#e6e7e8"></div>
<div style="position:absolute;left:142px;top:305px;width:1px;height:11px;background:#e6e7e8"></div>
<div style="position:absolute;left:184px;top:305px;width:1px;height:11px;background:#e6e7e8"></div>
<div style="position:absolute;left:225px;top:305px;width:1px;height:11px;background:#e6e7e8"></div>
<div style="position:absolute;left:267px;top:305px;width:1px;height:11px;background:#e6e7e8"></div>
<div style="position:absolute;left:309px;top:305px;width:1px;height:11px;background:#e6e7e8"></div>
<div style="position:absolute;left:350px;top:305px;width:1px;height:11px;background:#e6e7e8"></div>
<div style="position:absolute;left:392px;top:305px;width:1px;height:11px;background:#e6e7e8"></div>
<div style="position:absolute;left:434px;top:305px;width:1px;height:11px;background:#e6e7e8"></div>
<div style="position:absolute;left:475px;top:305px;width:1px;height:11px;background:#e6e7e8"></div>
<div style="position:absolute;left:517px;top:305px;width:1px;height:11px;background:#e6e7e8"></div>
<div style="position:absolute;left:559px;top:305px;width:1px;height:11px;background:#e6e7e8"></div>
<div style="position:absolute;left:600px;top:305px;width:1px;height:11px;background:#e6e7e8"></div>
<div style="position:absolute;left:642px;top:305px;width:1px;height:11px;background:#e6e7e8"></div>
<div style="position:absolute;left:684px;top:305px;width:1px;height:11px;background:#e6e7e8"></div>
<div style="position:absolute;left:725px;top:305px;width:1px;height:11px;background:#e6e7e8"></div>
<div style="position:absolute;left:767px;top:305px;width:1px;height:11px;background:#e6e7e8"></div>
<div style="position:absolute;left:809px;top:305px;width:1px;height:11px;background:#e6e7e8"></div>
<div style="position:absolute;left:851px;top:305px;width:1px;height:11px;background:#e6e7e8"></div>
<div style="position:absolute;left:892px;top:305px;width:1px;height:11px;background:#e6e7e8"></div>
<div style="position:absolute;left:934px;top:305px;width:1px;height:11px;background:#e6e7e8"></div>
<div style="position:absolute;left:976px;top:305px;width:1px;height:11px;background:#e6e7e8"></div>
<div class="t" style="left:602.8px;top:311.79px;font-size:8.2px;color:#1e1e1e;font-weight:bold;transform:scaleX(0.9883);transform-origin:0 0;">x</div>
<div class="t" style="left:607.2px;top:312.46px;font-size:8px;color:#1e1e1e;font-weight:bold;transform:scaleX(0.8098);transform-origin:0 0;">,</div>
<div style="position:absolute;left:18px;top:304px;width:41px;height:13px;overflow:hidden">
<div class="t" style="left:1px;top:7.79px;font-size:8.2px;color:#1e1e1e;transform:scaleX(1.0400);transform-origin:0 0">fornicater</div></div>
<div class="t" style="left:61px;top:311.79px;font-size:8.2px;color:#1e1e1e;font-weight:normal;transform:scaleX(1.0400);transform-origin:0 0;">Fornicater</div>
<div style="position:absolute;left:18px;top:329px;width:969px;height:1px;background:#e6e7e8"></div>
<div class="t" style="left:4.542224121093749px;top:323.23px;font-size:8.4px;color:#3c3c40;font-weight:normal;">17</div>
<div style="position:absolute;left:0px;top:329px;width:17px;height:1px;background:#c9ced5"></div>
<div style="position:absolute;left:59px;top:317px;width:1px;height:12px;background:#e6e7e8"></div>
<div style="position:absolute;left:350px;top:317px;width:1px;height:12px;background:#e6e7e8"></div>
<div style="position:absolute;left:392px;top:317px;width:1px;height:12px;background:#e6e7e8"></div>
<div style="position:absolute;left:434px;top:317px;width:1px;height:12px;background:#e6e7e8"></div>
<div style="position:absolute;left:475px;top:317px;width:1px;height:12px;background:#e6e7e8"></div>
<div style="position:absolute;left:517px;top:317px;width:1px;height:12px;background:#e6e7e8"></div>
<div style="position:absolute;left:559px;top:317px;width:1px;height:12px;background:#e6e7e8"></div>
<div style="position:absolute;left:600px;top:317px;width:1px;height:12px;background:#e6e7e8"></div>
<div style="position:absolute;left:642px;top:317px;width:1px;height:12px;background:#e6e7e8"></div>
<div style="position:absolute;left:684px;top:317px;width:1px;height:12px;background:#e6e7e8"></div>
<div style="position:absolute;left:725px;top:317px;width:1px;height:12px;background:#e6e7e8"></div>
<div style="position:absolute;left:767px;top:317px;width:1px;height:12px;background:#e6e7e8"></div>
<div style="position:absolute;left:809px;top:317px;width:1px;height:12px;background:#e6e7e8"></div>
<div style="position:absolute;left:851px;top:317px;width:1px;height:12px;background:#e6e7e8"></div>
<div style="position:absolute;left:892px;top:317px;width:1px;height:12px;background:#e6e7e8"></div>
<div style="position:absolute;left:934px;top:317px;width:1px;height:12px;background:#e6e7e8"></div>
<div style="position:absolute;left:976px;top:317px;width:1px;height:12px;background:#e6e7e8"></div>
<div class="t" style="left:602.8px;top:324.29px;font-size:8.2px;color:#1e1e1e;font-weight:bold;transform:scaleX(0.9883);transform-origin:0 0;">x</div>
<div class="t" style="left:607.2px;top:324.96px;font-size:8px;color:#1e1e1e;font-weight:bold;transform:scaleX(0.8098);transform-origin:0 0;">,</div>
<div style="position:absolute;left:18px;top:316px;width:41px;height:13px;overflow:hidden">
<div class="t" style="left:1px;top:8.29px;font-size:8.2px;color:#1e1e1e;transform:scaleX(1.0400);transform-origin:0 0">fornicater_desc</div></div>
<div class="t" style="left:61px;top:324.29px;font-size:8.2px;color:#1e1e1e;font-weight:normal;transform:scaleX(1.0625);transform-origin:0 0;">Валирийский короткий меч, завернутый в черную шкуру тюленя.</div>
<div style="position:absolute;left:18px;top:341px;width:969px;height:1px;background:#e6e7e8"></div>
<div class="t" style="left:4.542224121093749px;top:335.73px;font-size:8.4px;color:#3c3c40;font-weight:normal;">18</div>
<div style="position:absolute;left:0px;top:341px;width:17px;height:1px;background:#c9ced5"></div>
<div style="position:absolute;left:59px;top:330px;width:1px;height:11px;background:#e6e7e8"></div>
<div style="position:absolute;left:100px;top:330px;width:1px;height:11px;background:#e6e7e8"></div>
<div style="position:absolute;left:142px;top:330px;width:1px;height:11px;background:#e6e7e8"></div>
<div style="position:absolute;left:184px;top:330px;width:1px;height:11px;background:#e6e7e8"></div>
<div style="position:absolute;left:225px;top:330px;width:1px;height:11px;background:#e6e7e8"></div>
<div style="position:absolute;left:267px;top:330px;width:1px;height:11px;background:#e6e7e8"></div>
<div style="position:absolute;left:309px;top:330px;width:1px;height:11px;background:#e6e7e8"></div>
<div style="position:absolute;left:350px;top:330px;width:1px;height:11px;background:#e6e7e8"></div>
<div style="position:absolute;left:392px;top:330px;width:1px;height:11px;background:#e6e7e8"></div>
<div style="position:absolute;left:434px;top:330px;width:1px;height:11px;background:#e6e7e8"></div>
<div style="position:absolute;left:475px;top:330px;width:1px;height:11px;background:#e6e7e8"></div>
<div style="position:absolute;left:517px;top:330px;width:1px;height:11px;background:#e6e7e8"></div>
<div style="position:absolute;left:559px;top:330px;width:1px;height:11px;background:#e6e7e8"></div>
<div style="position:absolute;left:600px;top:330px;width:1px;height:11px;background:#e6e7e8"></div>
<div style="position:absolute;left:642px;top:330px;width:1px;height:11px;background:#e6e7e8"></div>
<div style="position:absolute;left:684px;top:330px;width:1px;height:11px;background:#e6e7e8"></div>
<div style="position:absolute;left:725px;top:330px;width:1px;height:11px;background:#e6e7e8"></div>
<div style="position:absolute;left:767px;top:330px;width:1px;height:11px;background:#e6e7e8"></div>
<div style="position:absolute;left:809px;top:330px;width:1px;height:11px;background:#e6e7e8"></div>
<div style="position:absolute;left:851px;top:330px;width:1px;height:11px;background:#e6e7e8"></div>
<div style="position:absolute;left:892px;top:330px;width:1px;height:11px;background:#e6e7e8"></div>
<div style="position:absolute;left:934px;top:330px;width:1px;height:11px;background:#e6e7e8"></div>
<div style="position:absolute;left:976px;top:330px;width:1px;height:11px;background:#e6e7e8"></div>
<div class="t" style="left:602.8px;top:336.79px;font-size:8.2px;color:#1e1e1e;font-weight:bold;transform:scaleX(0.9883);transform-origin:0 0;">x</div>
<div class="t" style="left:607.2px;top:337.46px;font-size:8px;color:#1e1e1e;font-weight:bold;transform:scaleX(0.8098);transform-origin:0 0;">,</div>
<div style="position:absolute;left:18px;top:329px;width:41px;height:13px;overflow:hidden">
<div class="t" style="left:1px;top:7.79px;font-size:8.2px;color:#1e1e1e;transform:scaleX(1.0400);transform-origin:0 0">harbinger</div></div>
<div class="t" style="left:61px;top:336.79px;font-size:8.2px;color:#1e1e1e;font-weight:normal;transform:scaleX(1.0400);transform-origin:0 0;">Harbinger</div>
<div style="position:absolute;left:18px;top:354px;width:969px;height:1px;background:#e6e7e8"></div>
<div class="t" style="left:4.542224121093749px;top:348.23px;font-size:8.4px;color:#3c3c40;font-weight:normal;">19</div>
<div style="position:absolute;left:0px;top:354px;width:17px;height:1px;background:#c9ced5"></div>
<div style="position:absolute;left:59px;top:342px;width:1px;height:12px;background:#e6e7e8"></div>
<div style="position:absolute;left:517px;top:342px;width:1px;height:12px;background:#e6e7e8"></div>
<div style="position:absolute;left:559px;top:342px;width:1px;height:12px;background:#e6e7e8"></div>
<div style="position:absolute;left:600px;top:342px;width:1px;height:12px;background:#e6e7e8"></div>
<div style="position:absolute;left:642px;top:342px;width:1px;height:12px;background:#e6e7e8"></div>
<div style="position:absolute;left:684px;top:342px;width:1px;height:12px;background:#e6e7e8"></div>
<div style="position:absolute;left:725px;top:342px;width:1px;height:12px;background:#e6e7e8"></div>
<div style="position:absolute;left:767px;top:342px;width:1px;height:12px;background:#e6e7e8"></div>
<div style="position:absolute;left:809px;top:342px;width:1px;height:12px;background:#e6e7e8"></div>
<div style="position:absolute;left:851px;top:342px;width:1px;height:12px;background:#e6e7e8"></div>
<div style="position:absolute;left:892px;top:342px;width:1px;height:12px;background:#e6e7e8"></div>
<div style="position:absolute;left:934px;top:342px;width:1px;height:12px;background:#e6e7e8"></div>
<div style="position:absolute;left:976px;top:342px;width:1px;height:12px;background:#e6e7e8"></div>
<div class="t" style="left:602.8px;top:349.29px;font-size:8.2px;color:#1e1e1e;font-weight:bold;transform:scaleX(0.9883);transform-origin:0 0;">x</div>
<div class="t" style="left:607.2px;top:349.96px;font-size:8px;color:#1e1e1e;font-weight:bold;transform:scaleX(0.8098);transform-origin:0 0;">,</div>
<div style="position:absolute;left:18px;top:341px;width:41px;height:13px;overflow:hidden">
<div class="t" style="left:1px;top:8.29px;font-size:8.2px;color:#1e1e1e;transform:scaleX(1.0400);transform-origin:0 0">harbinger_desc</div></div>
<div class="t" style="left:61px;top:349.29px;font-size:8.2px;color:#1e1e1e;font-weight:normal;transform:scaleX(1.0602);transform-origin:0 0;">Легендарный валирийский меч, который вспыхивает во время битвы и может расплавить сталь при контакте.</div>
<div style="position:absolute;left:18px;top:366px;width:969px;height:1px;background:#e6e7e8"></div>
<div class="t" style="left:4.542224121093749px;top:360.73px;font-size:8.4px;color:#3c3c40;font-weight:normal;">20</div>
<div style="position:absolute;left:0px;top:366px;width:17px;height:1px;background:#c9ced5"></div>
<div style="position:absolute;left:59px;top:355px;width:1px;height:11px;background:#e6e7e8"></div>
<div style="position:absolute;left:100px;top:355px;width:1px;height:11px;background:#e6e7e8"></div>
<div style="position:absolute;left:142px;top:355px;width:1px;height:11px;background:#e6e7e8"></div>
<div style="position:absolute;left:184px;top:355px;width:1px;height:11px;background:#e6e7e8"></div>
<div style="position:absolute;left:225px;top:355px;width:1px;height:11px;background:#e6e7e8"></div>
<div style="position:absolute;left:267px;top:355px;width:1px;height:11px;background:#e6e7e8"></div>
<div style="position:absolute;left:309px;top:355px;width:1px;height:11px;background:#e6e7e8"></div>
<div style="position:absolute;left:350px;top:355px;width:1px;height:11px;background:#e6e7e8"></div>
<div style="position:absolute;left:392px;top:355px;width:1px;height:11px;background:#e6e7e8"></div>
<div style="position:absolute;left:434px;top:355px;width:1px;height:11px;background:#e6e7e8"></div>
<div style="position:absolute;left:475px;top:355px;width:1px;height:11px;background:#e6e7e8"></div>
<div style="position:absolute;left:517px;top:355px;width:1px;height:11px;background:#e6e7e8"></div>
<div style="position:absolute;left:559px;top:355px;width:1px;height:11px;background:#e6e7e8"></div>
<div style="position:absolute;left:600px;top:355px;width:1px;height:11px;background:#e6e7e8"></div>
<div style="position:absolute;left:642px;top:355px;width:1px;height:11px;background:#e6e7e8"></div>
<div style="position:absolute;left:684px;top:355px;width:1px;height:11px;background:#e6e7e8"></div>
<div style="position:absolute;left:725px;top:355px;width:1px;height:11px;background:#e6e7e8"></div>
<div style="position:absolute;left:767px;top:355px;width:1px;height:11px;background:#e6e7e8"></div>
<div style="position:absolute;left:809px;top:355px;width:1px;height:11px;background:#e6e7e8"></div>
<div style="position:absolute;left:851px;top:355px;width:1px;height:11px;background:#e6e7e8"></div>
<div style="position:absolute;left:892px;top:355px;width:1px;height:11px;background:#e6e7e8"></div>
<div style="position:absolute;left:934px;top:355px;width:1px;height:11px;background:#e6e7e8"></div>
<div style="position:absolute;left:976px;top:355px;width:1px;height:11px;background:#e6e7e8"></div>
<div class="t" style="left:602.8px;top:361.79px;font-size:8.2px;color:#1e1e1e;font-weight:bold;transform:scaleX(0.9883);transform-origin:0 0;">x</div>
<div class="t" style="left:607.2px;top:362.46px;font-size:8px;color:#1e1e1e;font-weight:bold;transform:scaleX(0.8098);transform-origin:0 0;">,</div>
<div style="position:absolute;left:18px;top:354px;width:41px;height:13px;overflow:hidden">
<div class="t" style="left:1px;top:7.79px;font-size:8.2px;color:#1e1e1e;transform:scaleX(1.0400);transform-origin:0 0">misers_folly</div></div>
<div class="t" style="left:61px;top:361.79px;font-size:8.2px;color:#1e1e1e;font-weight:normal;transform:scaleX(1.0400);transform-origin:0 0;">Misers Folly</div>
<div style="position:absolute;left:18px;top:379px;width:969px;height:1px;background:#e6e7e8"></div>
<div class="t" style="left:4.542224121093749px;top:373.23px;font-size:8.4px;color:#3c3c40;font-weight:normal;">21</div>
<div style="position:absolute;left:0px;top:379px;width:17px;height:1px;background:#c9ced5"></div>
<div style="position:absolute;left:59px;top:367px;width:1px;height:12px;background:#e6e7e8"></div>
<div style="position:absolute;left:350px;top:367px;width:1px;height:12px;background:#e6e7e8"></div>
<div style="position:absolute;left:392px;top:367px;width:1px;height:12px;background:#e6e7e8"></div>
<div style="position:absolute;left:434px;top:367px;width:1px;height:12px;background:#e6e7e8"></div>
<div style="position:absolute;left:475px;top:367px;width:1px;height:12px;background:#e6e7e8"></div>
<div style="position:absolute;left:517px;top:367px;width:1px;height:12px;background:#e6e7e8"></div>
<div style="position:absolute;left:559px;top:367px;width:1px;height:12px;background:#e6e7e8"></div>
<div style="position:absolute;left:600px;top:367px;width:1px;height:12px;background:#e6e7e8"></div>
<div style="position:absolute;left:642px;top:367px;width:1px;height:12px;background:#e6e7e8"></div>
<div style="position:absolute;left:684px;top:367px;width:1px;height:12px;background:#e6e7e8"></div>
<div style="position:absolute;left:725px;top:367px;width:1px;height:12px;background:#e6e7e8"></div>
<div style="position:absolute;left:767px;top:367px;width:1px;height:12px;background:#e6e7e8"></div>
<div style="position:absolute;left:809px;top:367px;width:1px;height:12px;background:#e6e7e8"></div>
<div style="position:absolute;left:851px;top:367px;width:1px;height:12px;background:#e6e7e8"></div>
<div style="position:absolute;left:892px;top:367px;width:1px;height:12px;background:#e6e7e8"></div>
<div style="position:absolute;left:934px;top:367px;width:1px;height:12px;background:#e6e7e8"></div>
<div style="position:absolute;left:976px;top:367px;width:1px;height:12px;background:#e6e7e8"></div>
<div class="t" style="left:602.8px;top:374.29px;font-size:8.2px;color:#1e1e1e;font-weight:bold;transform:scaleX(0.9883);transform-origin:0 0;">x</div>
<div class="t" style="left:607.2px;top:374.96px;font-size:8px;color:#1e1e1e;font-weight:bold;transform:scaleX(0.8098);transform-origin:0 0;">,</div>
<div style="position:absolute;left:18px;top:366px;width:41px;height:13px;overflow:hidden">
<div class="t" style="left:1px;top:8.29px;font-size:8.2px;color:#1e1e1e;transform:scaleX(1.0400);transform-origin:0 0">misers_folly_desc</div></div>
<div class="t" style="left:61px;top:374.29px;font-size:8.2px;color:#1e1e1e;font-weight:normal;transform:scaleX(1.0682);transform-origin:0 0;">Одна из немногих существующих булав из валирийской стали</div>
<div style="position:absolute;left:18px;top:391px;width:969px;height:1px;background:#e6e7e8"></div>
<div class="t" style="left:4.542224121093749px;top:385.73px;font-size:8.4px;color:#3c3c40;font-weight:normal;">22</div>
<div style="position:absolute;left:0px;top:391px;width:17px;height:1px;background:#c9ced5"></div>
<div style="position:absolute;left:59px;top:380px;width:1px;height:11px;background:#e6e7e8"></div>
<div style="position:absolute;left:100px;top:380px;width:1px;height:11px;background:#e6e7e8"></div>
<div style="position:absolute;left:142px;top:380px;width:1px;height:11px;background:#e6e7e8"></div>
<div style="position:absolute;left:184px;top:380px;width:1px;height:11px;background:#e6e7e8"></div>
<div style="position:absolute;left:225px;top:380px;width:1px;height:11px;background:#e6e7e8"></div>
<div style="position:absolute;left:267px;top:380px;width:1px;height:11px;background:#e6e7e8"></div>
<div style="position:absolute;left:309px;top:380px;width:1px;height:11px;background:#e6e7e8"></div>
<div style="position:absolute;left:350px;top:380px;width:1px;height:11px;background:#e6e7e8"></div>
<div style="position:absolute;left:392px;top:380px;width:1px;height:11px;background:#e6e7e8"></div>
<div style="position:absolute;left:434px;top:380px;width:1px;height:11px;background:#e6e7e8"></div>
<div style="position:absolute;left:475px;top:380px;width:1px;height:11px;background:#e6e7e8"></div>
<div style="position:absolute;left:517px;top:380px;width:1px;height:11px;background:#e6e7e8"></div>
<div style="position:absolute;left:559px;top:380px;width:1px;height:11px;background:#e6e7e8"></div>
<div style="position:absolute;left:600px;top:380px;width:1px;height:11px;background:#e6e7e8"></div>
<div style="position:absolute;left:642px;top:380px;width:1px;height:11px;background:#e6e7e8"></div>
<div style="position:absolute;left:684px;top:380px;width:1px;height:11px;background:#e6e7e8"></div>
<div style="position:absolute;left:725px;top:380px;width:1px;height:11px;background:#e6e7e8"></div>
<div style="position:absolute;left:767px;top:380px;width:1px;height:11px;background:#e6e7e8"></div>
<div style="position:absolute;left:809px;top:380px;width:1px;height:11px;background:#e6e7e8"></div>
<div style="position:absolute;left:851px;top:380px;width:1px;height:11px;background:#e6e7e8"></div>
<div style="position:absolute;left:892px;top:380px;width:1px;height:11px;background:#e6e7e8"></div>
<div style="position:absolute;left:934px;top:380px;width:1px;height:11px;background:#e6e7e8"></div>
<div style="position:absolute;left:976px;top:380px;width:1px;height:11px;background:#e6e7e8"></div>
<div class="t" style="left:602.8px;top:386.79px;font-size:8.2px;color:#1e1e1e;font-weight:bold;transform:scaleX(0.9883);transform-origin:0 0;">x</div>
<div class="t" style="left:607.2px;top:387.46px;font-size:8px;color:#1e1e1e;font-weight:bold;transform:scaleX(0.8098);transform-origin:0 0;">,</div>
<div style="position:absolute;left:18px;top:379px;width:41px;height:13px;overflow:hidden">
<div class="t" style="left:1px;top:7.79px;font-size:8.2px;color:#1e1e1e;transform:scaleX(1.0400);transform-origin:0 0">red_menace</div></div>
<div class="t" style="left:61px;top:386.79px;font-size:8.2px;color:#1e1e1e;font-weight:normal;transform:scaleX(1.0400);transform-origin:0 0;">Red Menace</div>
<div style="position:absolute;left:18px;top:404px;width:969px;height:1px;background:#e6e7e8"></div>
<div class="t" style="left:4.542224121093749px;top:398.23px;font-size:8.4px;color:#3c3c40;font-weight:normal;">23</div>
<div style="position:absolute;left:0px;top:404px;width:17px;height:1px;background:#c9ced5"></div>
<div style="position:absolute;left:59px;top:392px;width:1px;height:12px;background:#e6e7e8"></div>
<div style="position:absolute;left:559px;top:392px;width:1px;height:12px;background:#e6e7e8"></div>
<div style="position:absolute;left:600px;top:392px;width:1px;height:12px;background:#e6e7e8"></div>
<div style="position:absolute;left:642px;top:392px;width:1px;height:12px;background:#e6e7e8"></div>
<div style="position:absolute;left:684px;top:392px;width:1px;height:12px;background:#e6e7e8"></div>
<div style="position:absolute;left:725px;top:392px;width:1px;height:12px;background:#e6e7e8"></div>
<div style="position:absolute;left:767px;top:392px;width:1px;height:12px;background:#e6e7e8"></div>
<div style="position:absolute;left:809px;top:392px;width:1px;height:12px;background:#e6e7e8"></div>
<div style="position:absolute;left:851px;top:392px;width:1px;height:12px;background:#e6e7e8"></div>
<div style="position:absolute;left:892px;top:392px;width:1px;height:12px;background:#e6e7e8"></div>
<div style="position:absolute;left:934px;top:392px;width:1px;height:12px;background:#e6e7e8"></div>
<div style="position:absolute;left:976px;top:392px;width:1px;height:12px;background:#e6e7e8"></div>
<div class="t" style="left:602.8px;top:399.29px;font-size:8.2px;color:#1e1e1e;font-weight:bold;transform:scaleX(0.9883);transform-origin:0 0;">x</div>
<div class="t" style="left:607.2px;top:399.96px;font-size:8px;color:#1e1e1e;font-weight:bold;transform:scaleX(0.8098);transform-origin:0 0;">,</div>
<div style="position:absolute;left:18px;top:391px;width:41px;height:13px;overflow:hidden">
<div class="t" style="left:1px;top:8.29px;font-size:8.2px;color:#1e1e1e;transform:scaleX(1.0400);transform-origin:0 0">red_menace_desc</div></div>
<div class="t" style="left:61px;top:399.29px;font-size:8.2px;color:#1e1e1e;font-weight:normal;transform:scaleX(1.0740);transform-origin:0 0;">Угольный валирийский длинный меч украшен тремя кровавыми рубинами на щитке и массивной рубиновым навершием.</div>
<div style="position:absolute;left:18px;top:416px;width:969px;height:1px;background:#e6e7e8"></div>
<div class="t" style="left:4.542224121093749px;top:410.73px;font-size:8.4px;color:#3c3c40;font-weight:normal;">24</div>
<div style="position:absolute;left:0px;top:416px;width:17px;height:1px;background:#c9ced5"></div>
<div style="position:absolute;left:59px;top:405px;width:1px;height:11px;background:#e6e7e8"></div>
<div style="position:absolute;left:100px;top:405px;width:1px;height:11px;background:#e6e7e8"></div>
<div style="position:absolute;left:142px;top:405px;width:1px;height:11px;background:#e6e7e8"></div>
<div style="position:absolute;left:184px;top:405px;width:1px;height:11px;background:#e6e7e8"></div>
<div style="position:absolute;left:225px;top:405px;width:1px;height:11px;background:#e6e7e8"></div>
<div style="position:absolute;left:267px;top:405px;width:1px;height:11px;background:#e6e7e8"></div>
<div style="position:absolute;left:309px;top:405px;width:1px;height:11px;background:#e6e7e8"></div>
<div style="position:absolute;left:350px;top:405px;width:1px;height:11px;background:#e6e7e8"></div>
<div style="position:absolute;left:392px;top:405px;width:1px;height:11px;background:#e6e7e8"></div>
<div style="position:absolute;left:434px;top:405px;width:1px;height:11px;background:#e6e7e8"></div>
<div style="position:absolute;left:475px;top:405px;width:1px;height:11px;background:#e6e7e8"></div>
<div style="position:absolute;left:517px;top:405px;width:1px;height:11px;background:#e6e7e8"></div>
<div style="position:absolute;left:559px;top:405px;width:1px;height:11px;background:#e6e7e8"></div>
<div style="position:absolute;left:600px;top:405px;width:1px;height:11px;background:#e6e7e8"></div>
<div style="position:absolute;left:642px;top:405px;width:1px;height:11px;background:#e6e7e8"></div>
<div style="position:absolute;left:684px;top:405px;width:1px;height:11px;background:#e6e7e8"></div>
<div style="position:absolute;left:725px;top:405px;width:1px;height:11px;background:#e6e7e8"></div>
<div style="position:absolute;left:767px;top:405px;width:1px;height:11px;background:#e6e7e8"></div>
<div style="position:absolute;left:809px;top:405px;width:1px;height:11px;background:#e6e7e8"></div>
<div style="position:absolute;left:851px;top:405px;width:1px;height:11px;background:#e6e7e8"></div>
<div style="position:absolute;left:892px;top:405px;width:1px;height:11px;background:#e6e7e8"></div>
<div style="position:absolute;left:934px;top:405px;width:1px;height:11px;background:#e6e7e8"></div>
<div style="position:absolute;left:976px;top:405px;width:1px;height:11px;background:#e6e7e8"></div>
<div class="t" style="left:602.8px;top:411.79px;font-size:8.2px;color:#1e1e1e;font-weight:bold;transform:scaleX(0.9883);transform-origin:0 0;">x</div>
<div class="t" style="left:607.2px;top:412.46px;font-size:8px;color:#1e1e1e;font-weight:bold;transform:scaleX(0.8098);transform-origin:0 0;">,</div>
<div style="position:absolute;left:18px;top:404px;width:41px;height:13px;overflow:hidden">
<div class="t" style="left:1px;top:7.79px;font-size:8.2px;color:#1e1e1e;transform:scaleX(1.0400);transform-origin:0 0">stormblade</div></div>
<div class="t" style="left:61px;top:411.79px;font-size:8.2px;color:#1e1e1e;font-weight:normal;transform:scaleX(1.0400);transform-origin:0 0;">Stormblade</div>
<div style="position:absolute;left:18px;top:429px;width:969px;height:1px;background:#e6e7e8"></div>
<div class="t" style="left:4.542224121093749px;top:423.23px;font-size:8.4px;color:#3c3c40;font-weight:normal;">25</div>
<div style="position:absolute;left:0px;top:429px;width:17px;height:1px;background:#c9ced5"></div>
<div style="position:absolute;left:59px;top:417px;width:1px;height:12px;background:#e6e7e8"></div>
<div style="position:absolute;left:517px;top:417px;width:1px;height:12px;background:#e6e7e8"></div>
<div style="position:absolute;left:559px;top:417px;width:1px;height:12px;background:#e6e7e8"></div>
<div style="position:absolute;left:600px;top:417px;width:1px;height:12px;background:#e6e7e8"></div>
<div style="position:absolute;left:642px;top:417px;width:1px;height:12px;background:#e6e7e8"></div>
<div style="position:absolute;left:684px;top:417px;width:1px;height:12px;background:#e6e7e8"></div>
<div style="position:absolute;left:725px;top:417px;width:1px;height:12px;background:#e6e7e8"></div>
<div style="position:absolute;left:767px;top:417px;width:1px;height:12px;background:#e6e7e8"></div>
<div style="position:absolute;left:809px;top:417px;width:1px;height:12px;background:#e6e7e8"></div>
<div style="position:absolute;left:851px;top:417px;width:1px;height:12px;background:#e6e7e8"></div>
<div style="position:absolute;left:892px;top:417px;width:1px;height:12px;background:#e6e7e8"></div>
<div style="position:absolute;left:934px;top:417px;width:1px;height:12px;background:#e6e7e8"></div>
<div style="position:absolute;left:976px;top:417px;width:1px;height:12px;background:#e6e7e8"></div>
<div class="t" style="left:602.8px;top:424.29px;font-size:8.2px;color:#1e1e1e;font-weight:bold;transform:scaleX(0.9883);transform-origin:0 0;">x</div>
<div class="t" style="left:607.2px;top:424.96px;font-size:8px;color:#1e1e1e;font-weight:bold;transform:scaleX(0.8098);transform-origin:0 0;">,</div>
<div style="position:absolute;left:18px;top:416px;width:41px;height:13px;overflow:hidden">
<div class="t" style="left:1px;top:8.29px;font-size:8.2px;color:#1e1e1e;transform:scaleX(1.0400);transform-origin:0 0">stormblade_desc</div></div>
<div class="t" style="left:61px;top:424.29px;font-size:8.2px;color:#1e1e1e;font-weight:normal;transform:scaleX(1.0746);transform-origin:0 0;">Меч из валирийской стали украшенный двумя поднятыми оленьими рогами и рукояткой в виде оленя.</div>
<div style="position:absolute;left:18px;top:441px;width:969px;height:1px;background:#e6e7e8"></div>
<div class="t" style="left:4.542224121093749px;top:435.73px;font-size:8.4px;color:#3c3c40;font-weight:normal;">26</div>
<div style="position:absolute;left:0px;top:441px;width:17px;height:1px;background:#c9ced5"></div>
<div style="position:absolute;left:59px;top:430px;width:1px;height:11px;background:#e6e7e8"></div>
<div style="position:absolute;left:100px;top:430px;width:1px;height:11px;background:#e6e7e8"></div>
<div style="position:absolute;left:142px;top:430px;width:1px;height:11px;background:#e6e7e8"></div>
<div style="position:absolute;left:184px;top:430px;width:1px;height:11px;background:#e6e7e8"></div>
<div style="position:absolute;left:225px;top:430px;width:1px;height:11px;background:#e6e7e8"></div>
<div style="position:absolute;left:267px;top:430px;width:1px;height:11px;background:#e6e7e8"></div>
<div style="position:absolute;left:309px;top:430px;width:1px;height:11px;background:#e6e7e8"></div>
<div style="position:absolute;left:350px;top:430px;width:1px;height:11px;background:#e6e7e8"></div>
<div style="position:absolute;left:392px;top:430px;width:1px;height:11px;background:#e6e7e8"></div>
<div style="position:absolute;left:434px;top:430px;width:1px;height:11px;background:#e6e7e8"></div>
<div style="position:absolute;left:475px;top:430px;width:1px;height:11px;background:#e6e7e8"></div>
<div style="position:absolute;left:517px;top:430px;width:1px;height:11px;background:#e6e7e8"></div>
<div style="position:absolute;left:559px;top:430px;width:1px;height:11px;background:#e6e7e8"></div>
<div style="position:absolute;left:600px;top:430px;width:1px;height:11px;background:#e6e7e8"></div>
<div style="position:absolute;left:642px;top:430px;width:1px;height:11px;background:#e6e7e8"></div>
<div style="position:absolute;left:684px;top:430px;width:1px;height:11px;background:#e6e7e8"></div>
<div style="position:absolute;left:725px;top:430px;width:1px;height:11px;background:#e6e7e8"></div>
<div style="position:absolute;left:767px;top:430px;width:1px;height:11px;background:#e6e7e8"></div>
<div style="position:absolute;left:809px;top:430px;width:1px;height:11px;background:#e6e7e8"></div>
<div style="position:absolute;left:851px;top:430px;width:1px;height:11px;background:#e6e7e8"></div>
<div style="position:absolute;left:892px;top:430px;width:1px;height:11px;background:#e6e7e8"></div>
<div style="position:absolute;left:934px;top:430px;width:1px;height:11px;background:#e6e7e8"></div>
<div style="position:absolute;left:976px;top:430px;width:1px;height:11px;background:#e6e7e8"></div>
<div class="t" style="left:602.8px;top:436.79px;font-size:8.2px;color:#1e1e1e;font-weight:bold;transform:scaleX(0.9883);transform-origin:0 0;">x</div>
<div class="t" style="left:607.2px;top:437.46px;font-size:8px;color:#1e1e1e;font-weight:bold;transform:scaleX(0.8098);transform-origin:0 0;">,</div>
<div style="position:absolute;left:18px;top:429px;width:41px;height:13px;overflow:hidden">
<div class="t" style="left:1px;top:7.79px;font-size:8.2px;color:#1e1e1e;transform:scaleX(1.0400);transform-origin:0 0">unbound</div></div>
<div class="t" style="left:61px;top:436.79px;font-size:8.2px;color:#1e1e1e;font-weight:normal;transform:scaleX(1.0400);transform-origin:0 0;">Unbound</div>
<div style="position:absolute;left:18px;top:454px;width:969px;height:1px;background:#e6e7e8"></div>
<div class="t" style="left:4.542224121093749px;top:448.23px;font-size:8.4px;color:#3c3c40;font-weight:normal;">27</div>
<div style="position:absolute;left:0px;top:454px;width:17px;height:1px;background:#c9ced5"></div>
<div style="position:absolute;left:59px;top:442px;width:1px;height:12px;background:#e6e7e8"></div>
<div style="position:absolute;left:600px;top:442px;width:1px;height:12px;background:#e6e7e8"></div>
<div style="position:absolute;left:642px;top:442px;width:1px;height:12px;background:#e6e7e8"></div>
<div style="position:absolute;left:684px;top:442px;width:1px;height:12px;background:#e6e7e8"></div>
<div style="position:absolute;left:725px;top:442px;width:1px;height:12px;background:#e6e7e8"></div>
<div style="position:absolute;left:767px;top:442px;width:1px;height:12px;background:#e6e7e8"></div>
<div style="position:absolute;left:809px;top:442px;width:1px;height:12px;background:#e6e7e8"></div>
<div style="position:absolute;left:851px;top:442px;width:1px;height:12px;background:#e6e7e8"></div>
<div style="position:absolute;left:892px;top:442px;width:1px;height:12px;background:#e6e7e8"></div>
<div style="position:absolute;left:934px;top:442px;width:1px;height:12px;background:#e6e7e8"></div>
<div style="position:absolute;left:976px;top:442px;width:1px;height:12px;background:#e6e7e8"></div>
<div class="t" style="left:602.8px;top:449.29px;font-size:8.2px;color:#1e1e1e;font-weight:bold;transform:scaleX(0.9883);transform-origin:0 0;">x</div>
<div class="t" style="left:607.2px;top:449.96px;font-size:8px;color:#1e1e1e;font-weight:bold;transform:scaleX(0.8098);transform-origin:0 0;">,</div>
<div style="position:absolute;left:18px;top:441px;width:41px;height:13px;overflow:hidden">
<div class="t" style="left:1px;top:8.29px;font-size:8.2px;color:#1e1e1e;transform:scaleX(1.0400);transform-origin:0 0">unbound_desc</div></div>
<div style="position:absolute;left:60px;top:441px;width:540px;height:13px;overflow:hidden">
<div class="t" style="left:1px;top:8.29px;font-size:8.2px;color:#1e1e1e;transform:scaleX(1.0643);transform-origin:0 0">Светящийся и изысканный валирийский меч, который, как утверждают некоторые, был сделан из метеоритной руды, похожей на ту, из которой</div></div>
<div style="position:absolute;left:18px;top:466px;width:969px;height:1px;background:#e6e7e8"></div>
<div class="t" style="left:4.542224121093749px;top:460.73px;font-size:8.4px;color:#3c3c40;font-weight:normal;">28</div>
<div style="position:absolute;left:0px;top:466px;width:17px;height:1px;background:#c9ced5"></div>
<div style="position:absolute;left:59px;top:455px;width:1px;height:11px;background:#e6e7e8"></div>
<div style="position:absolute;left:100px;top:455px;width:1px;height:11px;background:#e6e7e8"></div>
<div style="position:absolute;left:142px;top:455px;width:1px;height:11px;background:#e6e7e8"></div>
<div style="position:absolute;left:184px;top:455px;width:1px;height:11px;background:#e6e7e8"></div>
<div style="position:absolute;left:225px;top:455px;width:1px;height:11px;background:#e6e7e8"></div>
<div style="position:absolute;left:267px;top:455px;width:1px;height:11px;background:#e6e7e8"></div>
<div style="position:absolute;left:309px;top:455px;width:1px;height:11px;background:#e6e7e8"></div>
<div style="position:absolute;left:350px;top:455px;width:1px;height:11px;background:#e6e7e8"></div>
<div style="position:absolute;left:392px;top:455px;width:1px;height:11px;background:#e6e7e8"></div>
<div style="position:absolute;left:434px;top:455px;width:1px;height:11px;background:#e6e7e8"></div>
<div style="position:absolute;left:475px;top:455px;width:1px;height:11px;background:#e6e7e8"></div>
<div style="position:absolute;left:517px;top:455px;width:1px;height:11px;background:#e6e7e8"></div>
<div style="position:absolute;left:559px;top:455px;width:1px;height:11px;background:#e6e7e8"></div>
<div style="position:absolute;left:600px;top:455px;width:1px;height:11px;background:#e6e7e8"></div>
<div style="position:absolute;left:642px;top:455px;width:1px;height:11px;background:#e6e7e8"></div>
<div style="position:absolute;left:684px;top:455px;width:1px;height:11px;background:#e6e7e8"></div>
<div style="position:absolute;left:725px;top:455px;width:1px;height:11px;background:#e6e7e8"></div>
<div style="position:absolute;left:767px;top:455px;width:1px;height:11px;background:#e6e7e8"></div>
<div style="position:absolute;left:809px;top:455px;width:1px;height:11px;background:#e6e7e8"></div>
<div style="position:absolute;left:851px;top:455px;width:1px;height:11px;background:#e6e7e8"></div>
<div style="position:absolute;left:892px;top:455px;width:1px;height:11px;background:#e6e7e8"></div>
<div style="position:absolute;left:934px;top:455px;width:1px;height:11px;background:#e6e7e8"></div>
<div style="position:absolute;left:976px;top:455px;width:1px;height:11px;background:#e6e7e8"></div>
<div class="t" style="left:602.8px;top:461.79px;font-size:8.2px;color:#1e1e1e;font-weight:bold;transform:scaleX(0.9883);transform-origin:0 0;">x</div>
<div class="t" style="left:607.2px;top:462.46px;font-size:8px;color:#1e1e1e;font-weight:bold;transform:scaleX(0.8098);transform-origin:0 0;">,</div>
<div style="position:absolute;left:18px;top:454px;width:41px;height:13px;overflow:hidden">
<div class="t" style="left:1px;top:7.79px;font-size:8.2px;color:#1e1e1e;transform:scaleX(1.0400);transform-origin:0 0">vainglory</div></div>
<div class="t" style="left:61px;top:461.79px;font-size:8.2px;color:#1e1e1e;font-weight:normal;transform:scaleX(1.0400);transform-origin:0 0;">Vainglory</div>
<div style="position:absolute;left:18px;top:479px;width:969px;height:1px;background:#e6e7e8"></div>
<div class="t" style="left:4.542224121093749px;top:473.23px;font-size:8.4px;color:#3c3c40;font-weight:normal;">29</div>
<div style="position:absolute;left:0px;top:479px;width:17px;height:1px;background:#c9ced5"></div>
<div style="position:absolute;left:59px;top:467px;width:1px;height:12px;background:#e6e7e8"></div>
<div style="position:absolute;left:350px;top:467px;width:1px;height:12px;background:#e6e7e8"></div>
<div style="position:absolute;left:392px;top:467px;width:1px;height:12px;background:#e6e7e8"></div>
<div style="position:absolute;left:434px;top:467px;width:1px;height:12px;background:#e6e7e8"></div>
<div style="position:absolute;left:475px;top:467px;width:1px;height:12px;background:#e6e7e8"></div>
<div style="position:absolute;left:517px;top:467px;width:1px;height:12px;background:#e6e7e8"></div>
<div style="position:absolute;left:559px;top:467px;width:1px;height:12px;background:#e6e7e8"></div>
<div style="position:absolute;left:600px;top:467px;width:1px;height:12px;background:#e6e7e8"></div>
<div style="position:absolute;left:642px;top:467px;width:1px;height:12px;background:#e6e7e8"></div>
<div style="position:absolute;left:684px;top:467px;width:1px;height:12px;background:#e6e7e8"></div>
<div style="position:absolute;left:725px;top:467px;width:1px;height:12px;background:#e6e7e8"></div>
<div style="position:absolute;left:767px;top:467px;width:1px;height:12px;background:#e6e7e8"></div>
<div style="position:absolute;left:809px;top:467px;width:1px;height:12px;background:#e6e7e8"></div>
<div style="position:absolute;left:851px;top:467px;width:1px;height:12px;background:#e6e7e8"></div>
<div style="position:absolute;left:892px;top:467px;width:1px;height:12px;background:#e6e7e8"></div>
<div style="position:absolute;left:934px;top:467px;width:1px;height:12px;background:#e6e7e8"></div>
<div style="position:absolute;left:976px;top:467px;width:1px;height:12px;background:#e6e7e8"></div>
<div class="t" style="left:602.8px;top:474.29px;font-size:8.2px;color:#1e1e1e;font-weight:bold;transform:scaleX(0.9883);transform-origin:0 0;">x</div>
<div class="t" style="left:607.2px;top:474.96px;font-size:8px;color:#1e1e1e;font-weight:bold;transform:scaleX(0.8098);transform-origin:0 0;">,</div>
<div style="position:absolute;left:18px;top:466px;width:41px;height:13px;overflow:hidden">
<div class="t" style="left:1px;top:8.29px;font-size:8.2px;color:#1e1e1e;transform:scaleX(1.0400);transform-origin:0 0">vainglory_desc</div></div>
<div class="t" style="left:61px;top:474.29px;font-size:8.2px;color:#1e1e1e;font-weight:normal;transform:scaleX(1.0428);transform-origin:0 0;">A Valyrian Steel sword and halberd crossover with a lightweight steel handle.</div>
<div style="position:absolute;left:18px;top:491px;width:969px;height:1px;background:#e6e7e8"></div>
<div class="t" style="left:4.542224121093749px;top:485.73px;font-size:8.4px;color:#3c3c40;font-weight:normal;">30</div>
<div style="position:absolute;left:0px;top:491px;width:17px;height:1px;background:#c9ced5"></div>
<div style="position:absolute;left:59px;top:480px;width:1px;height:11px;background:#e6e7e8"></div>
<div style="position:absolute;left:100px;top:480px;width:1px;height:11px;background:#e6e7e8"></div>
<div style="position:absolute;left:142px;top:480px;width:1px;height:11px;background:#e6e7e8"></div>
<div style="position:absolute;left:184px;top:480px;width:1px;height:11px;background:#e6e7e8"></div>
<div style="position:absolute;left:225px;top:480px;width:1px;height:11px;background:#e6e7e8"></div>
<div style="position:absolute;left:267px;top:480px;width:1px;height:11px;background:#e6e7e8"></div>
<div style="position:absolute;left:309px;top:480px;width:1px;height:11px;background:#e6e7e8"></div>
<div style="position:absolute;left:350px;top:480px;width:1px;height:11px;background:#e6e7e8"></div>
<div style="position:absolute;left:392px;top:480px;width:1px;height:11px;background:#e6e7e8"></div>
<div style="position:absolute;left:434px;top:480px;width:1px;height:11px;background:#e6e7e8"></div>
<div style="position:absolute;left:475px;top:480px;width:1px;height:11px;background:#e6e7e8"></div>
<div style="position:absolute;left:517px;top:480px;width:1px;height:11px;background:#e6e7e8"></div>
<div style="position:absolute;left:559px;top:480px;width:1px;height:11px;background:#e6e7e8"></div>
<div style="position:absolute;left:600px;top:480px;width:1px;height:11px;background:#e6e7e8"></div>
<div style="position:absolute;left:642px;top:480px;width:1px;height:11px;background:#e6e7e8"></div>
<div style="position:absolute;left:684px;top:480px;width:1px;height:11px;background:#e6e7e8"></div>
<div style="position:absolute;left:725px;top:480px;width:1px;height:11px;background:#e6e7e8"></div>
<div style="position:absolute;left:767px;top:480px;width:1px;height:11px;background:#e6e7e8"></div>
<div style="position:absolute;left:809px;top:480px;width:1px;height:11px;background:#e6e7e8"></div>
<div style="position:absolute;left:851px;top:480px;width:1px;height:11px;background:#e6e7e8"></div>
<div style="position:absolute;left:892px;top:480px;width:1px;height:11px;background:#e6e7e8"></div>
<div style="position:absolute;left:934px;top:480px;width:1px;height:11px;background:#e6e7e8"></div>
<div style="position:absolute;left:976px;top:480px;width:1px;height:11px;background:#e6e7e8"></div>
<div class="t" style="left:602.8px;top:486.79px;font-size:8.2px;color:#1e1e1e;font-weight:bold;transform:scaleX(0.9883);transform-origin:0 0;">x</div>
<div class="t" style="left:607.2px;top:487.46px;font-size:8px;color:#1e1e1e;font-weight:bold;transform:scaleX(0.8098);transform-origin:0 0;">,</div>
<div style="position:absolute;left:18px;top:479px;width:41px;height:13px;overflow:hidden">
<div class="t" style="left:1px;top:7.79px;font-size:8.2px;color:#1e1e1e;transform:scaleX(1.0400);transform-origin:0 0">vendetta</div></div>
<div class="t" style="left:61px;top:486.79px;font-size:8.2px;color:#1e1e1e;font-weight:normal;transform:scaleX(1.0400);transform-origin:0 0;">Vendetta</div>
<div style="position:absolute;left:18px;top:504px;width:969px;height:1px;background:#e6e7e8"></div>
<div class="t" style="left:4.542224121093749px;top:498.23px;font-size:8.4px;color:#3c3c40;font-weight:normal;">31</div>
<div style="position:absolute;left:0px;top:504px;width:17px;height:1px;background:#c9ced5"></div>
<div style="position:absolute;left:59px;top:492px;width:1px;height:12px;background:#e6e7e8"></div>
<div style="position:absolute;left:475px;top:492px;width:1px;height:12px;background:#e6e7e8"></div>
<div style="position:absolute;left:517px;top:492px;width:1px;height:12px;background:#e6e7e8"></div>
<div style="position:absolute;left:559px;top:492px;width:1px;height:12px;background:#e6e7e8"></div>
<div style="position:absolute;left:600px;top:492px;width:1px;height:12px;background:#e6e7e8"></div>
<div style="position:absolute;left:642px;top:492px;width:1px;height:12px;background:#e6e7e8"></div>
<div style="position:absolute;left:684px;top:492px;width:1px;height:12px;background:#e6e7e8"></div>
<div style="position:absolute;left:725px;top:492px;width:1px;height:12px;background:#e6e7e8"></div>
<div style="position:absolute;left:767px;top:492px;width:1px;height:12px;background:#e6e7e8"></div>
<div style="position:absolute;left:809px;top:492px;width:1px;height:12px;background:#e6e7e8"></div>
<div style="position:absolute;left:851px;top:492px;width:1px;height:12px;background:#e6e7e8"></div>
<div style="position:absolute;left:892px;top:492px;width:1px;height:12px;background:#e6e7e8"></div>
<div style="position:absolute;left:934px;top:492px;width:1px;height:12px;background:#e6e7e8"></div>
<div style="position:absolute;left:976px;top:492px;width:1px;height:12px;background:#e6e7e8"></div>
<div class="t" style="left:602.8px;top:499.29px;font-size:8.2px;color:#1e1e1e;font-weight:bold;transform:scaleX(0.9883);transform-origin:0 0;">x</div>
<div class="t" style="left:607.2px;top:499.96px;font-size:8px;color:#1e1e1e;font-weight:bold;transform:scaleX(0.8098);transform-origin:0 0;">,</div>
<div style="position:absolute;left:18px;top:491px;width:41px;height:13px;overflow:hidden">
<div class="t" style="left:1px;top:8.29px;font-size:8.2px;color:#1e1e1e;transform:scaleX(1.0400);transform-origin:0 0">vendetta_desc</div></div>
<div class="t" style="left:61px;top:499.29px;font-size:8.2px;color:#1e1e1e;font-weight:normal;transform:scaleX(1.0688);transform-origin:0 0;">Тонкий валирийский меч, вырезанный из множества проклятых рун и углублением для хранения яда.</div>
<div class="t" style="left:4.542224121093749px;top:510.73px;font-size:8.4px;color:#3c3c40;font-weight:normal;">32</div>
<div style="position:absolute;left:59px;top:505px;width:1px;height:7px;background:#e6e7e8"></div>
<div style="position:absolute;left:100px;top:505px;width:1px;height:7px;background:#e6e7e8"></div>
<div style="position:absolute;left:142px;top:505px;width:1px;height:7px;background:#e6e7e8"></div>
<div style="position:absolute;left:184px;top:505px;width:1px;height:7px;background:#e6e7e8"></div>
<div style="position:absolute;left:225px;top:505px;width:1px;height:7px;background:#e6e7e8"></div>
<div style="position:absolute;left:267px;top:505px;width:1px;height:7px;background:#e6e7e8"></div>
<div style="position:absolute;left:309px;top:505px;width:1px;height:7px;background:#e6e7e8"></div>
<div style="position:absolute;left:350px;top:505px;width:1px;height:7px;background:#e6e7e8"></div>
<div style="position:absolute;left:392px;top:505px;width:1px;height:7px;background:#e6e7e8"></div>
<div style="position:absolute;left:434px;top:505px;width:1px;height:7px;background:#e6e7e8"></div>
<div style="position:absolute;left:475px;top:505px;width:1px;height:7px;background:#e6e7e8"></div>
<div style="position:absolute;left:517px;top:505px;width:1px;height:7px;background:#e6e7e8"></div>
<div style="position:absolute;left:559px;top:505px;width:1px;height:7px;background:#e6e7e8"></div>
<div style="position:absolute;left:600px;top:505px;width:1px;height:7px;background:#e6e7e8"></div>
<div style="position:absolute;left:642px;top:505px;width:1px;height:7px;background:#e6e7e8"></div>
<div style="position:absolute;left:684px;top:505px;width:1px;height:7px;background:#e6e7e8"></div>
<div style="position:absolute;left:725px;top:505px;width:1px;height:7px;background:#e6e7e8"></div>
<div style="position:absolute;left:767px;top:505px;width:1px;height:7px;background:#e6e7e8"></div>
<div style="position:absolute;left:809px;top:505px;width:1px;height:7px;background:#e6e7e8"></div>
<div style="position:absolute;left:851px;top:505px;width:1px;height:7px;background:#e6e7e8"></div>
<div style="position:absolute;left:892px;top:505px;width:1px;height:7px;background:#e6e7e8"></div>
<div style="position:absolute;left:934px;top:505px;width:1px;height:7px;background:#e6e7e8"></div>
<div style="position:absolute;left:976px;top:505px;width:1px;height:7px;background:#e6e7e8"></div>
<div class="t" style="left:602.8px;top:511.79px;font-size:8.2px;color:#1e1e1e;font-weight:bold;transform:scaleX(0.9883);transform-origin:0 0;">x</div>
<div class="t" style="left:607.2px;top:512.46px;font-size:8px;color:#1e1e1e;font-weight:bold;transform:scaleX(0.8098);transform-origin:0 0;">,</div>
<div style="position:absolute;left:18px;top:504px;width:41px;height:13px;overflow:hidden">
<div class="t" style="left:1px;top:7.79px;font-size:8.2px;color:#1e1e1e;transform:scaleX(1.0400);transform-origin:0 0">whiplash</div></div>
<div class="t" style="left:61px;top:511.79px;font-size:8.2px;color:#1e1e1e;font-weight:normal;transform:scaleX(1.0400);transform-origin:0 0;">Whiplash</div>
<div style="position:absolute;left:58.5px;top:128.2px;width:43px;height:13.6px;border:2px solid #1a1a1a;box-sizing:border-box"></div>
<div style="position:absolute;left:99.5px;top:140px;width:2.5px;height:2.5px;background:#1a1a1a;outline:1px solid #fff"></div>
<div style="position:absolute;left:987px;top:104px;width:13px;height:409px;background:#e1e5ea"></div>
<div style="position:absolute;left:987px;top:104px;width:1px;height:409px;background:#c9ced5"></div>
<div style="position:absolute;left:988.5px;top:104.5px;width:9px;height:4px;background:#fff;border:1px solid #9aa3ad;box-sizing:border-box"></div>
<div style="position:absolute;left:988px;top:109px;width:10px;height:11px;background:linear-gradient(90deg,#e9ecf0,#dfe3e8)"></div>
<svg style="position:absolute;left:990.5px;top:113px" width="5" height="3" viewBox="0 0 5 3"><path d="M0 3L2.5 0L5 3Z" fill="#333"/></svg>
<div style="position:absolute;left:988px;top:121px;width:9.5px;height:67.5px;background:linear-gradient(90deg,#f4f6f8,#e8ebef 60%,#dfe3e8);border:1px solid #bcc3cc;border-radius:1.5px;box-sizing:border-box"></div>
<div style="position:absolute;left:991px;top:152px;width:3px;height:3px;background:#c6ccd4"></div>
<svg style="position:absolute;left:990.5px;top:504.5px" width="5" height="3" viewBox="0 0 5 3"><path d="M0 0H5L2.5 3Z" fill="#333"/></svg>
<div style="position:absolute;left:0px;top:523px;width:1000px;height:14px;background:linear-gradient(#f6f7f9,#e8ebee 30%,#dcdfe4 80%,#d3d7dc)"></div>
<div class="t" style="left:4px;top:530.62px;font-size:7.2px;color:#4a4a4a;font-weight:normal;transform:scaleX(0.9913);transform-origin:0 0;">Готово</div>
<div style="position:absolute;left:31px;top:524px;width:1px;height:13px;background:#c8cdd4"></div>
<div style="position:absolute;left:847.5px;top:524px;width:1px;height:13px;background:#c8cdd4"></div>
<div style="position:absolute;left:850px;top:524px;width:11.5px;height:12px;background:linear-gradient(#fde8a3,#f9d470);border:1px solid #e8b94a;box-sizing:border-box"></div>
<svg style="position:absolute;left:851.5px;top:525.5px" width="9" height="8" viewBox="0 0 9 8"><rect x="0" y="0" width="8.5" height="7.5" fill="#6a6a6a"/><g fill="#f4f4f4"><rect x="0.7" y="0.7" width="2" height="1.3"/><rect x="3.3" y="0.7" width="2" height="1.3"/><rect x="5.9" y="0.7" width="2" height="1.3"/><rect x="0.7" y="2.5" width="2" height="1.3"/><rect x="3.3" y="2.5" width="2" height="1.3"/><rect x="5.9" y="2.5" width="2" height="1.3"/><rect x="0.7" y="4.3" width="2" height="1.3"/><rect x="3.3" y="4.3" width="2" height="1.3"/><rect x="5.9" y="4.3" width="2" height="1.3"/><rect x="0.7" y="6.1" width="2" height="0.9"/><rect x="3.3" y="6.1" width="2" height="0.9"/><rect x="5.9" y="6.1" width="2" height="0.9"/></g></svg>
<svg style="position:absolute;left:863px;top:525.5px" width="9" height="9" viewBox="0 0 9 9"><rect x="0.5" y="0.5" width="8" height="8" fill="#d0d5dc" stroke="#888" stroke-width="0.6"/><rect x="2" y="2" width="5" height="5" fill="#fff" stroke="#888" stroke-width="0.5"/></svg>
<svg style="position:absolute;left:875px;top:525.5px" width="9" height="9" viewBox="0 0 9 9"><rect x="0.5" y="0.5" width="8" height="8" fill="#d0d5dc" stroke="#888" stroke-width="0.6"/><path d="M3 1V5.5H6V1" fill="none" stroke="#555" stroke-width="0.8"/></svg>
<div class="t" style="left:891px;top:530.62px;font-size:7.2px;color:#4a4a4a;font-weight:normal;transform:scaleX(0.9248);transform-origin:0 0;">100%</div>
<svg style="position:absolute;left:912px;top:525px" width="11" height="11" viewBox="0 0 11 11"><circle cx="5.5" cy="5.5" r="5" fill="#f4f5f7" stroke="#8a9099" stroke-width="0.7"/><path d="M3 5.5H8" stroke="#444" stroke-width="1"/></svg>
<div style="position:absolute;left:923px;top:530px;width:64px;height:1px;background:#a8aeb6"></div>
<svg style="position:absolute;left:952.5px;top:525px" width="6" height="10" viewBox="0 0 6 10"><path d="M0.5 0.5H5.5V7L3 9.5L0.5 7Z" fill="#f8f9fb" stroke="#8a9099" stroke-width="0.7"/></svg>
<svg style="position:absolute;left:987px;top:525px" width="11" height="11" viewBox="0 0 11 11"><circle cx="5.5" cy="5.5" r="5" fill="#f4f5f7" stroke="#8a9099" stroke-width="0.7"/><path d="M3 5.5H8M5.5 3V8" stroke="#444" stroke-width="1"/></svg>
<div style="position:absolute;left:0px;top:512.3px;width:1000px;height:11px;background:#dfe3e9"></div>
<div style="position:absolute;left:0px;top:512px;width:987px;height:1px;background:#c3c8cf"></div>
<div style="position:absolute;left:0px;top:523px;width:1000px;height:1px;background:#a9afb7"></div>
<svg style="position:absolute;left:3px;top:515px" width="5" height="5" viewBox="0 0 5 5"><path d="M0.5 0V5" stroke="#6a717b" stroke-width="0.7"/><path d="M4.5 0L1.5 2.5L4.5 5Z" fill="#5f6670"/></svg>
<svg style="position:absolute;left:14px;top:515px" width="5" height="5" viewBox="0 0 5 5"><path d="M3 0L0 2.5L3 5Z" fill="#5f6670"/></svg>
<svg style="position:absolute;left:23px;top:515px" width="5" height="5" viewBox="0 0 5 5"><path d="M0 0L3 2.5L0 5Z" fill="#5f6670"/></svg>
<svg style="position:absolute;left:32.5px;top:515px" width="5" height="5" viewBox="0 0 5 5"><path d="M0 0L3 2.5L0 5Z" fill="#5f6670"/><path d="M4 0V5" stroke="#6a717b" stroke-width="0.7"/></svg>
<svg style="position:absolute;left:40px;top:512.5px" width="134" height="11" viewBox="0 0 134 11"><path d="M108 10.3L116 0H132.4L124.7 10.3Z" fill="#e6e9ee" stroke="#f4f5f7" stroke-width="0.8"/><path d="M0.5 10.3H108L116 -0.5" fill="none" stroke="#b6bcc4" stroke-width="0.7"/><path d="M0.6 -0.6V10H108L116 -0.6Z" fill="#fff"/><path d="M0.5 -0.5V10.3" stroke="#c6cbd2" stroke-width="0.8"/></svg>
<div class="t" style="left:45.8px;top:518.23px;font-size:8.4px;color:#2a2a2a;font-weight:normal;transform:scaleX(1.0633);transform-origin:0 0;-webkit-text-stroke:0.25px #2a2a2a;">zzzz_congenital_valyrian</div>
<svg style="position:absolute;left:154.8px;top:513.5px" width="10" height="8" viewBox="0 0 10 8"><rect x="1" y="1.5" width="8" height="6" rx="1.5" fill="#e4ecf8" stroke="#6f8fc0" stroke-width="0.9"/><circle cx="2.2" cy="2" r="1.7" fill="#eaa52a"/></svg>
<div style="position:absolute;left:592.5px;top:513px;width:5px;height:9px;background:#fff;border:1px solid #aab1ba;box-sizing:border-box"></div>
<svg style="position:absolute;left:601px;top:515.5px" width="3.5" height="5" viewBox="0 0 3.5 5"><path d="M3.5 0L0 2.5L3.5 5Z" fill="#333"/></svg>
<div style="position:absolute;left:608.5px;top:512.8px;width:347.5px;height:9.8px;background:linear-gradient(#f6f7f9,#e5e8ec);border:1px solid #b8bfc8;border-radius:1.5px;box-sizing:border-box"></div>
<div style="position:absolute;left:780px;top:516px;width:3px;height:3px;background:#c6ccd4"></div>
<svg style="position:absolute;left:976px;top:515.5px" width="3.5" height="5" viewBox="0 0 3.5 5"><path d="M0 0L3.5 2.5L0 5Z" fill="#333"/></svg>
<div style="position:absolute;left:983px;top:513px;width:5px;height:9px;background:#fff;border:1px solid #aab1ba;box-sizing:border-box"></div>
<div style="position:absolute;left:988px;top:513px;width:12px;height:10px;background:#dfe3e9"></div>
<div style="position:absolute;left:822.1px;top:88.7px;width:153.6px;height:82.9px;background:linear-gradient(#ffffff,#f3f3f8 50%,#e6e6ef);border:1px solid #8f8f97;box-sizing:border-box;box-shadow:1px 1px 1px rgba(0,0,0,0.15)"></div>
<div class="t" style="left:825.2px;top:98.12px;font-size:7.2px;color:#3a3a3a;font-weight:bold;transform:scaleX(0.9270);transform-origin:0 0;">Сортировка и фильтр</div>
<div class="t" style="left:829px;top:111.62px;font-size:7.2px;color:#555;font-weight:normal;transform:scaleX(0.9455);transform-origin:0 0;">Упорядочивание данных с целью</div>
<div class="t" style="left:829px;top:120.62px;font-size:7.2px;color:#555;font-weight:normal;transform:scaleX(0.9291);transform-origin:0 0;">упрощения их анализа.</div>
<div class="t" style="left:829px;top:138.42px;font-size:7.2px;color:#555;font-weight:normal;transform:scaleX(0.9465);transform-origin:0 0;">Можно отсортировать выделенные данные</div>
<div class="t" style="left:829px;top:147.32px;font-size:7.2px;color:#555;font-weight:normal;transform:scaleX(0.9539);transform-origin:0 0;">по возрастанию или убыванию либо</div>
<div class="t" style="left:829px;top:156.12px;font-size:7.2px;color:#555;font-weight:normal;transform:scaleX(0.9436);transform-origin:0 0;">временно отфильтровать отдельные</div>
<div class="t" style="left:829px;top:164.62px;font-size:7.2px;color:#555;font-weight:normal;transform:scaleX(0.9169);transform-origin:0 0;">значения.</div>
<div style="position:absolute;left:0px;top:537px;width:1000px;height:26px;background:linear-gradient(90deg,#101010,#141414 25%,#1d1d1d 38%,#2c2c2c 52%,#343434 65%,#363636)"></div>
<svg style="position:absolute;left:10px;top:544px" width="12" height="12" viewBox="0 0 12 12"><path d="M0 1.6L4.9 0.9V5.6H0ZM5.6 0.8L12 0V5.6H5.6ZM0 6.3H4.9V11.1L0 10.4ZM5.6 6.3H12V12L5.6 11.2Z" fill="#fff"/></svg>
<svg style="position:absolute;left:41px;top:544px" width="12" height="12" viewBox="0 0 12 12"><circle cx="7.3" cy="4.7" r="3.6" fill="none" stroke="#fff" stroke-width="1"/><path d="M4.6 7.4L1 11" stroke="#fff" stroke-width="1.1"/></svg>
<svg style="position:absolute;left:72px;top:544px" width="12" height="12" viewBox="0 0 12 12"><path d="M1.3 0.5V10.5M7.8 0.5V10.5M0.5 1.2H8.6M0.5 5.5H8.6M0.5 9.8H8.6M10.5 0.3V10.5" fill="none" stroke="#bbb" stroke-width="1"/><circle cx="10.5" cy="4.5" r="1" fill="#fff"/></svg>
<svg style="position:absolute;left:104px;top:543px" width="14" height="14" viewBox="0 0 14 14"><path d="M13 8H4Q4.5 11.5 8.5 11.5Q11 11.5 12.7 10.3V12.8Q11 13.8 8 13.8Q1.5 13.8 1.3 7.2Q1.5 0.5 7.5 0.3Q13.2 0.5 13 7ZM4.2 5.6H10.2Q10 2.8 7.3 2.8Q4.6 2.8 4.2 5.6Z" fill="#1a8ae6"/></svg>
<div style="position:absolute;left:136px;top:542.2px;width:15px;height:15.6px;background:#1f4a8e;border-radius:1.5px"></div>
<div class="t" style="left:139.3px;top:551.70px;font-size:10px;color:#f4f4f4;font-weight:bold;transform:scaleX(0.8308);transform-origin:0 0;">B</div>
<div style="position:absolute;left:145.8px;top:551.6px;width:1.5px;height:1.5px;background:#31a9e8"></div>
<svg style="position:absolute;left:167.8px;top:542.5px" width="17" height="15" viewBox="0 0 17 15"><path d="M0 4.5L8.3 0L16.5 4.5V14.7H0Z" fill="#0f6cc4"/><path d="M2.5 4.5H14V8L8.3 10.5L2.5 8Z" fill="#f2f2f2"/><path d="M0 4.5L8.3 9.5L16.5 4.5V14.7H0Z" fill="#27a4ec"/><path d="M16.5 4.5V14.7H4Z" fill="#3bb4f4"/></svg>
<svg style="position:absolute;left:200px;top:542px" width="16" height="16" viewBox="0 0 16 16"><path d="M5 4Q5 1 8 1Q11 1 11 4" fill="none" stroke="#fff" stroke-width="1"/><rect x="0.5" y="4" width="15" height="11.5" fill="#fafafa"/><rect x="5" y="6.5" width="2.7" height="2.7" fill="#f25022"/><rect x="8.3" y="6.5" width="2.7" height="2.7" fill="#7fba00"/><rect x="5" y="9.8" width="2.7" height="2.7" fill="#00a4ef"/><rect x="8.3" y="9.8" width="2.7" height="2.7" fill="#ffb900"/></svg>
<svg style="position:absolute;left:233px;top:542px" width="16" height="16" viewBox="0 0 16 16"><circle cx="8" cy="8" r="7.6" fill="#f2f2f2"/><path d="M4.8 3.5L8 8.5L11.2 3.5M8 8.5V13" fill="none" stroke="#e01f1f" stroke-width="1.9"/></svg>
<svg style="position:absolute;left:265px;top:542px" width="16" height="16" viewBox="0 0 16 16"><path d="M0.8 0.6H11.5L15.5 8L11.5 15.4H0.8Z" fill="#f4f4f4"/><text x="0" y="0" font-size="14" font-family="Liberation Serif" fill="#e3262a" transform="translate(3.2 13.8) scale(0.75 1)">Я</text></svg>
<svg style="position:absolute;left:297px;top:542px" width="16" height="16" viewBox="0 0 16 16"><circle cx="8" cy="8" r="7.5" fill="#db4437"/><path d="M8 8L14.5 4.2A7.5 7.5 0 0 1 8 15.5Z" fill="#f4c20d"/><path d="M8 8L8 15.5A7.5 7.5 0 0 1 1.5 4.2Z" fill="#0f9d58"/><circle cx="8" cy="8" r="3.6" fill="#fff"/><circle cx="8" cy="8" r="2.8" fill="#4285f4"/></svg>
<svg style="position:absolute;left:329px;top:542px" width="16" height="16" viewBox="0 0 16 16"><rect x="1" y="1.5" width="14" height="9.5" fill="#e8eef4" stroke="#b8c2cc" stroke-width="0.6"/><path d="M2 8L5 6L7 8.5L9 4L11 7.5L14 6" fill="none" stroke="#3a8ad0" stroke-width="0.8"/><path d="M6 11H10L11 14H5Z" fill="#c8d0d8"/><rect x="3" y="14" width="10" height="1.5" fill="#aab4be"/></svg>
<svg style="position:absolute;left:362px;top:542px" width="16" height="16" viewBox="0 0 16 16"><ellipse cx="8" cy="8" rx="7.3" ry="7.6" fill="#e31b23"/><ellipse cx="8" cy="8" rx="3.2" ry="5.6" fill="#1a1a1a"/></svg>
<svg style="position:absolute;left:395px;top:543px" width="16" height="14" viewBox="0 0 16 14"><path d="M0 1H6L7.5 2.5H16V13H0Z" fill="#f4c64e"/><rect x="0" y="4" width="16" height="9" fill="#ffd867"/><path d="M5 13V8.5H11V13" fill="none" stroke="#1c8ee0" stroke-width="1.6"/></svg>
<svg style="position:absolute;left:426px;top:542px" width="16" height="16" viewBox="0 0 16 16"><rect x="0.5" y="1" width="15" height="4.5" fill="#b7262b"/><rect x="0.5" y="5.5" width="15" height="4.5" fill="#5b3aa0"/><rect x="0.5" y="10" width="15" height="5" fill="#3a9a38"/><rect x="6" y="0.5" width="4" height="15" fill="#e0a030"/><rect x="6.5" y="6" width="3" height="3" fill="#fff"/></svg>
<svg style="position:absolute;left:459px;top:542px" width="16" height="16" viewBox="0 0 16 16"><rect x="0" y="0" width="16" height="16" fill="#12233a"/><path d="M0.5 3.5L3.5 0.5M0.5 9.5L9.5 0.5M2.5 15.5L15.5 2.5M8.5 15.5L15.5 8.5" stroke="#2a5a8a" stroke-width="1"/><path d="M2.2 2.5Q8 0 13.8 2.5V8.5Q13.8 13 8 15.5Q2.2 13 2.2 8.5Z" fill="#d9d6d0" stroke="#b08a40" stroke-width="0.9"/><path d="M3.5 4L6 6M10 4L12.5 6M4 11L6 9M10 9L12 11" stroke="#8a8a8a" stroke-width="0.8"/><path d="M7 2.5H9V14H7ZM3 6.3H13V8.3H3Z" fill="#b4201c"/></svg>
<svg style="position:absolute;left:491px;top:542px" width="16" height="16" viewBox="0 0 16 16"><rect x="0" y="0" width="16" height="16" fill="#12233a"/><path d="M0.5 3.5L3.5 0.5M0.5 9.5L9.5 0.5M2.5 15.5L15.5 2.5M8.5 15.5L15.5 8.5" stroke="#2a5a8a" stroke-width="1"/><path d="M2.2 2.5Q8 0 13.8 2.5V8.5Q13.8 13 8 15.5Q2.2 13 2.2 8.5Z" fill="#d9d6d0" stroke="#b08a40" stroke-width="0.9"/><path d="M3.5 4L6 6M10 4L12.5 6M4 11L6 9M10 9L12 11" stroke="#8a8a8a" stroke-width="0.8"/><path d="M7 2.5H9V14H7ZM3 6.3H13V8.3H3Z" fill="#b4201c"/></svg>
<div style="position:absolute;left:516px;top:537px;width:31.5px;height:26px;background:#565656"></div>
<svg style="position:absolute;left:523px;top:542px" width="16" height="16" viewBox="0 0 16 16"><defs><linearGradient id="xt" x1="0" y1="0" x2="1" y2="1"><stop offset="0" stop-color="#f2faf0"/><stop offset="1" stop-color="#bfe0b8"/></linearGradient></defs><rect x="0.5" y="0.5" width="15" height="14.5" rx="1" fill="url(#xt)" stroke="#9acb90" stroke-width="0.6"/><path d="M2.5 2.5L8.5 11M8.5 2.5L2.5 11" stroke="#2a9a3a" stroke-width="1.8"/><path d="M2.5 2.5L5.5 6.8" stroke="#1c6e28" stroke-width="1.3"/><path d="M7 14Q11 9 15.5 8.5V15H7Z" fill="#f4f8f2" stroke="#9acb90" stroke-width="0.5"/></svg>
<div style="position:absolute;left:292px;top:561px;width:27px;height:2px;background:#76b9ed"></div>
<div style="position:absolute;left:389px;top:561px;width:28px;height:2px;background:#76b9ed"></div>
<div style="position:absolute;left:421px;top:561px;width:28px;height:2px;background:#76b9ed"></div>
<div style="position:absolute;left:453px;top:561px;width:28px;height:2px;background:#76b9ed"></div>
<div style="position:absolute;left:485px;top:561px;width:28px;height:2px;background:#76b9ed"></div>
<div style="position:absolute;left:516px;top:561px;width:31px;height:2px;background:#99cff5"></div>
<svg style="position:absolute;left:798px;top:543px" width="11" height="11" viewBox="0 0 11 11"><circle cx="7.5" cy="2.8" r="2" fill="none" stroke="#fff" stroke-width="0.9"/><path d="M4.5 8.5Q5 5.5 7.5 5.5Q10 5.5 10.5 8.5" fill="none" stroke="#fff" stroke-width="0.9"/><circle cx="3" cy="6" r="1.8" fill="none" stroke="#fff" stroke-width="0.9"/><path d="M0.5 11Q0.8 8.5 3 8.5Q5.2 8.5 5.5 11" fill="none" stroke="#fff" stroke-width="0.9"/></svg>
<svg style="position:absolute;left:823px;top:546px" width="9" height="5" viewBox="0 0 9 5"><path d="M0.5 4.5L4.5 0.5L8.5 4.5" fill="none" stroke="#fff" stroke-width="1"/></svg>
<svg style="position:absolute;left:839px;top:544px" width="9" height="10" viewBox="0 0 9 10"><path d="M1 9.5Q1 3 8 1.5M3 9.5Q3 5 8 4M5 9.5Q5 7 8 6.5M7 9.5V8.5" fill="none" stroke="#bbb" stroke-width="0.8"/></svg>
<svg style="position:absolute;left:853px;top:543px" width="10" height="11" viewBox="0 0 10 11"><circle cx="4.5" cy="5.5" r="4" fill="#f2a81d"/><circle cx="4.5" cy="5.5" r="2.5" fill="#222"/><path d="M4.5 5.5L8 1" stroke="#fff" stroke-width="0.8"/><circle cx="7" cy="8.3" r="2.7" fill="#e02828"/><rect x="5.8" y="7.6" width="2.4" height="2" fill="#fff"/></svg>
<svg style="position:absolute;left:869px;top:545px" width="12" height="8" viewBox="0 0 12 8"><rect x="0.5" y="0.5" width="10" height="6.5" fill="none" stroke="#ddd" stroke-width="0.8"/><rect x="1.7" y="1.7" width="3" height="4.1" fill="#ddd"/><rect x="11" y="2.5" width="1" height="2.5" fill="#ddd"/></svg>
<svg style="position:absolute;left:884px;top:544px" width="12" height="10" viewBox="0 0 12 10"><path d="M0.5 3H2.5L5.5 0.5V9.5L2.5 7H0.5Z" fill="none" stroke="#ddd" stroke-width="0.8"/><path d="M7.5 3Q8.5 5 7.5 7M9.2 2Q10.7 5 9.2 8M10.8 1Q12.8 5 10.8 9" fill="none" stroke="#aaa" stroke-width="0.7"/></svg>
<div class="t" style="left:901.8px;top:550.79px;font-size:8.2px;color:#eee;font-weight:normal;transform:scaleX(0.8285);transform-origin:0 0;">ENG</div>
<div class="t" style="left:934.4px;top:544.79px;font-size:8.2px;color:#eee;font-weight:normal;transform:scaleX(0.8444);transform-origin:0 0;">16:37</div>
<div class="t" style="left:925.5px;top:556.29px;font-size:8.2px;color:#eee;font-weight:normal;transform:scaleX(0.8663);transform-origin:0 0;">16.03.2020</div>
<svg style="position:absolute;left:973px;top:543px" width="18" height="18" viewBox="0 0 18 18"><path d="M0.5 0.5H12.5V9.5H6L3 12V9.5H0.5Z" fill="#fff"/><path d="M2.5 3H10.5M2.5 5H10.5M2.5 7H8" stroke="#222324" stroke-width="0.9"/><circle cx="11.5" cy="11.5" r="5.8" fill="#222324" stroke="#aaa" stroke-width="0.7"/></svg>
<div class="t" style="left:979.5px;top:555.49px;font-size:7.6px;color:#fff;font-weight:normal;transform:scaleX(1.0063);transform-origin:0 0;">21</div>
<div style="position:absolute;left:998px;top:537px;width:2px;height:26px;background:#4a4b4c"></div>
</body></html>
